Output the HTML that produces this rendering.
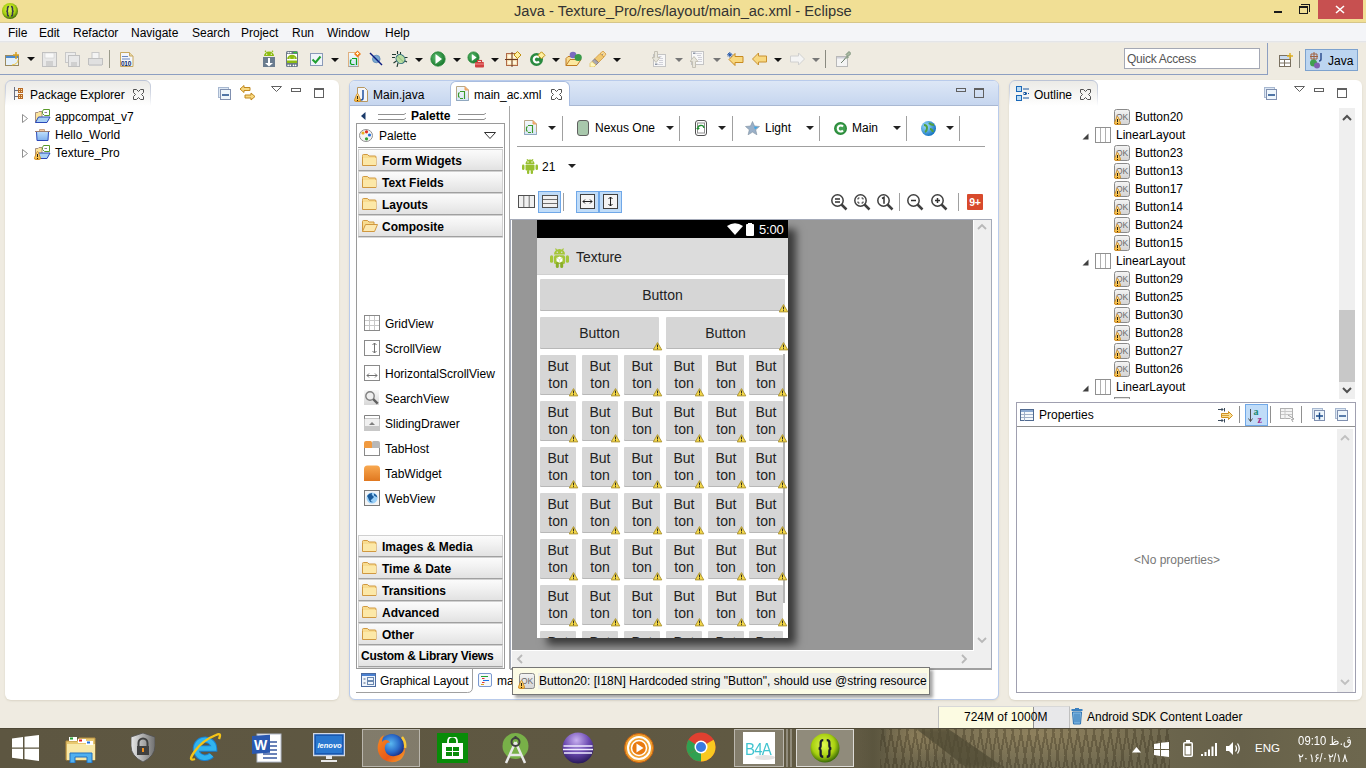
<!DOCTYPE html>
<html><head><meta charset="utf-8">
<style>
*{margin:0;padding:0;box-sizing:border-box}
html,body{width:1366px;height:768px;overflow:hidden;background:#efebe1;font-family:"Liberation Sans",sans-serif;font-size:12px;color:#000;position:relative}
.a{position:absolute}
.t{position:absolute;white-space:nowrap;line-height:1}
</style></head><body>
<svg width="0" height="0" style="position:absolute"><defs><linearGradient id="wg" x1="0" y1="0" x2="0" y2="1"><stop offset="0" stop-color="#fff0b0"/><stop offset="1" stop-color="#f0b030"/></linearGradient><linearGradient id="okg" x1="0" y1="0" x2="0" y2="1"><stop offset="0" stop-color="#f4f4f4"/><stop offset="1" stop-color="#d4d4d4"/></linearGradient></defs></svg>
<!-- ===== TITLE BAR ===== -->
<div class="a" style="left:0;top:0;width:1366px;height:22px;background:#f1df95"></div>
<div class="a" style="left:0;top:22px;width:1366px;height:1px;background:#d6c68a"></div>
<svg class="a" style="left:2px;top:3px" width="17" height="17" viewBox="0 0 17 17"><defs><radialGradient id="gi" cx="45%" cy="40%" r="60%"><stop offset="0" stop-color="#e0f850"/><stop offset="0.65" stop-color="#a8d010"/><stop offset="1" stop-color="#3a6a08"/></radialGradient></defs><circle cx="8" cy="8" r="8" fill="url(#gi)"/><path d="M7 3.5q-1.5 0-1.5 1.5v2q0 1-1 1.2 1 .3 1 1.3v2q0 1.5 1.5 1.5M9 3.5q1.5 0 1.5 1.5v2q0 1 1 1.2-1 .3-1 1.3v2q0 1.5-1.5 1.5" stroke="#363650" stroke-width="1.5" fill="none"/></svg>
<div class="t" style="left:514px;top:4px;font-size:14.7px;color:#333">Java - Texture_Pro/res/layout/main_ac.xml - Eclipse</div>
<div class="a" style="left:1274px;top:11px;width:8px;height:2px;background:#1a1a1a"></div>
<div class="a" style="left:1301px;top:4px;width:9px;height:8px;border:1px solid #1a1a1a;border-left:0;border-bottom:0"></div>
<div class="a" style="left:1299px;top:6px;width:9px;height:8px;border:1px solid #1a1a1a;border-top-width:2px"></div>
<div class="a" style="left:1318px;top:0;width:45px;height:19px;background:#c75050"></div>
<svg class="a" style="left:1335px;top:5px" width="10" height="9"><path d="M1 1L9 8M9 1L1 8" stroke="#fff" stroke-width="1.6"/></svg>

<!-- ===== MENU BAR ===== -->
<div class="a" style="left:0;top:23px;width:1366px;height:18px;background:#f4f5f8"></div><div class="a" style="left:0;top:41px;width:1366px;height:1px;background:#e4e5e8"></div><div class="a" style="left:0;top:42px;width:1366px;height:1px;background:#eceae6"></div>
<div class="t" style="left:8px;top:27px">File</div>
<div class="t" style="left:39px;top:27px">Edit</div>
<div class="t" style="left:73px;top:27px">Refactor</div>
<div class="t" style="left:131px;top:27px">Navigate</div>
<div class="t" style="left:192px;top:27px">Search</div>
<div class="t" style="left:241px;top:27px">Project</div>
<div class="t" style="left:292px;top:27px">Run</div>
<div class="t" style="left:327px;top:27px">Window</div>
<div class="t" style="left:385px;top:27px">Help</div>

<!-- ===== TOOLBAR ===== -->
<div class="a" style="left:0;top:74px;width:1267px;height:1px;background:#8d9fc1"></div>
<div class="a" style="left:1267px;top:43px;width:1px;height:32px;background:#8d9fc1"></div>

<!-- toolbar icons -->
<svg class="a" style="left:5px;top:51px" width="16" height="16"><rect x="0.5" y="4.5" width="13" height="10" fill="#e4f0fa" stroke="#9a8a60"/><rect x="1" y="5" width="12" height="2" fill="#4a8ad0"/><path d="M11 1v7M8 4h6" stroke="#d8a020" stroke-width="1.5"/><path d="M13 9q0 4-6 5" stroke="#f0c840" fill="none"/></svg>
<svg class="a" style="left:27px;top:57px" width="8" height="5"><path d="M0 0h8L4 4z" fill="#111"/></svg>
<svg class="a" style="left:42px;top:52px" width="15" height="15"><rect x="0.5" y="0.5" width="14" height="14" fill="#e8e8e8" stroke="#c0c0c0"/><rect x="3" y="1" width="9" height="5" fill="#f8f8f8" stroke="#c8c8c8" stroke-width="0.5"/><rect x="4" y="9" width="7" height="5" fill="#d0d0d0"/></svg>
<svg class="a" style="left:65px;top:52px" width="16" height="15"><rect x="0.5" y="0.5" width="10" height="10" fill="#ececec" stroke="#c8c8c8"/><rect x="3.5" y="3.5" width="11" height="11" fill="#e8e8e8" stroke="#c0c0c0"/><rect x="6" y="10" width="6" height="4" fill="#d0d0d0"/></svg>
<svg class="a" style="left:88px;top:52px" width="15" height="15"><rect x="4" y="0.5" width="7" height="6" fill="#f4f4f4" stroke="#c8c8c8"/><rect x="0.5" y="6.5" width="14" height="6" fill="#e0e0e0" stroke="#c0c0c0"/><rect x="1" y="12" width="13" height="2" fill="#cfcfcf"/></svg>
<div class="a" style="left:109px;top:50px;width:1px;height:18px;background:#9a9a8a"></div>
<svg class="a" style="left:120px;top:52px" width="14" height="15"><path d="M0.5 0.5h9l3.5 3.5v10.5h-12.5z" fill="#f4f6fb" stroke="#c8a860"/><path d="M9.5 0.5v3.5h3.5" fill="#e8d8a8" stroke="#c8a860"/><path d="M2 4.5h6M2 7h8" stroke="#6a88c0"/><text x="1" y="14" font-family="Liberation Sans" font-weight="bold" font-size="6.5" fill="#0a2a6a" letter-spacing="-0.3">010</text></svg>

<svg class="a" style="left:263px;top:50px" width="12" height="17"><path d="M1 6a5 4.6 0 0 1 10 0z" fill="#8cbc10"/><circle cx="2.5" cy="1.3" r=".8" fill="#8cbc10"/><circle cx="9.5" cy="1.3" r=".8" fill="#8cbc10"/><circle cx="3.7" cy="4.2" r=".7" fill="#f0ece0"/><circle cx="8.3" cy="4.2" r=".7" fill="#f0ece0"/><rect x="0" y="7" width="12" height="10" fill="#6a7c8e"/><path d="M5 8h2v5h3l-4 3.5-4-3.5h3z" fill="#fff"/></svg>
<svg class="a" style="left:286px;top:51px" width="12" height="16"><rect x="0" y="0" width="12" height="16" rx="1.5" fill="#6a7888"/><circle cx="2.2" cy="1.6" r=".8" fill="#fff"/><rect x="3.5" y="1" width="2" height="1.2" fill="#fff"/><circle cx="8.3" cy="1.6" r=".8" fill="#20e020"/><circle cx="10.2" cy="1.6" r=".8" fill="#20e020"/><rect x="1" y="3" width="10" height="9" fill="#fff"/><path d="M1.2 8a4.8 4.2 0 0 1 9.6 0z" fill="#8cbc10"/><circle cx="3.8" cy="7" r=".6" fill="#fff"/><circle cx="8.2" cy="7" r=".6" fill="#fff"/><rect x="1" y="9.5" width="10" height="2.5" fill="#8cbc10"/><circle cx="2.2" cy="14.4" r=".8" fill="#fff"/><circle cx="4.3" cy="14.4" r=".8" fill="#fff"/><circle cx="7.5" cy="14.4" r=".8" fill="#fff"/><circle cx="9.6" cy="14.4" r=".8" fill="#fff"/></svg>
<svg class="a" style="left:310px;top:53px" width="13" height="13"><rect x="0.5" y="0.5" width="12" height="12" fill="#f0f4fa" stroke="#8a9ab8"/><path d="M2.5 6.5l3 3 5-6" stroke="#20a030" stroke-width="2" fill="none"/></svg>
<svg class="a" style="left:331px;top:58px" width="8" height="5"><path d="M0 0h8L4 4z" fill="#111"/></svg>
<svg class="a" style="left:347px;top:50px" width="15" height="17"><defs><linearGradient id="nxg" x1="0" y1="0" x2="0" y2="1"><stop offset="0" stop-color="#f4f8fc"/><stop offset="1" stop-color="#c8e4f4"/></linearGradient></defs><rect x="1.5" y="2.5" width="10" height="14" fill="url(#nxg)" stroke="#e0b080"/><path d="M1.5 16.5h10" stroke="#a0a0a0"/><path d="M5 8.5h4.5v6.5M4.5 9.5L3.5 10.5v3l1 1h3" stroke="#10a020" stroke-width="1.2" fill="none"/><path d="M10.5 0.5l3.5 3.5-3.5 3.5-3.5-3.5z" fill="#f08020"/><path d="M10.5 2v3M9 3.5h3" stroke="#fff4d0"/></svg>
<svg class="a" style="left:369px;top:52px" width="14" height="14"><circle cx="7.3" cy="7" r="3.8" fill="#7aa8d0" stroke="#5a88b8" stroke-width="0.8"/><path d="M1 1l12 12" stroke="#0a1a80" stroke-width="1.4"/></svg>
<svg class="a" style="left:392px;top:51px" width="16" height="16"><path d="M5.5 0v3M8.5 1v3M0 3.5h4M0 6.5h3M1.5 12l3-2M13 6.5h2.5M12 9.5l3 1.5M5 16l1-4" stroke="#203830" stroke-width="1.1"/><ellipse cx="8.5" cy="8" rx="4.2" ry="4.8" transform="rotate(-40 8.5 8)" fill="#b8dca0" stroke="#2a6a7a" stroke-width="1"/><path d="M5.5 5l6 6" stroke="#80b070" stroke-width="0.8"/></svg>
<svg class="a" style="left:415px;top:58px" width="8" height="5"><path d="M0 0h8L4 4z" fill="#111"/></svg>
<svg class="a" style="left:430px;top:51px" width="16" height="16"><defs><radialGradient id="rg" cx="40%" cy="40%" r="60%"><stop offset="0" stop-color="#60c070"/><stop offset="1" stop-color="#1a7a30"/></radialGradient></defs><circle cx="8" cy="8" r="7.2" fill="url(#rg)" stroke="#2a8a3a" stroke-width="0.8"/><path d="M5.5 3v10l6.5-5z" fill="#fff"/></svg>
<svg class="a" style="left:453px;top:58px" width="8" height="5"><path d="M0 0h8L4 4z" fill="#111"/></svg>
<svg class="a" style="left:467px;top:51px" width="18" height="17"><circle cx="6.5" cy="6.5" r="5.6" fill="url(#rg)" stroke="#2a8a3a" stroke-width="0.8"/><path d="M4.8 3v7l4.8-3.5z" fill="#fff"/><rect x="8" y="11" width="9" height="5.5" rx="1" fill="#d04040"/><rect x="10.5" y="9.5" width="4" height="2.2" fill="none" stroke="#d04040" stroke-width="1.1"/><path d="M8 13h9" stroke="#f8a0a0" stroke-width="0.8"/></svg>
<svg class="a" style="left:491px;top:58px" width="8" height="5"><path d="M0 0h8L4 4z" fill="#111"/></svg>
<svg class="a" style="left:505px;top:51px" width="17" height="16"><rect x="1.5" y="2.5" width="11" height="12" fill="#f4dcb0" stroke="#b06a48"/><circle cx="4.5" cy="5.5" r="1.8" fill="#fff8e0"/><circle cx="9.5" cy="5.5" r="1.8" fill="#fff8e0"/><circle cx="4.5" cy="11.5" r="1.8" fill="#fff8e0"/><circle cx="9.5" cy="11.5" r="1.8" fill="#fff8e0"/><path d="M7 1v15M0 8.5h13" stroke="#6a3a20" stroke-width="1"/><path d="M12.5 0.5l3.5 3.5-3.5 3.5-3.5-3.5z" fill="#fff0a0" stroke="#c09010"/></svg>
<svg class="a" style="left:529px;top:51px" width="17" height="16"><circle cx="7.5" cy="8.5" r="6.5" fill="#2a8a40"/><path d="M10 6.5a3 3 0 1 0 0 4" stroke="#fff" stroke-width="2.2" fill="none"/><path d="M12.5 0.8l3.5 3.5-3.5 3.5-3.5-3.5z" fill="#fff0a0" stroke="#c09010"/></svg>
<svg class="a" style="left:552px;top:58px" width="8" height="5"><path d="M0 0h8L4 4z" fill="#111"/></svg>
<svg class="a" style="left:565px;top:51px" width="18" height="16"><path d="M1 14.5V7.5l2-2h4" fill="#f8dc90" stroke="#c07a20"/><path d="M1 14.5l4-6h11l-4 6z" fill="#fce8a0" stroke="#c07a20"/><circle cx="8" cy="4" r="3.3" fill="#7a6ac0"/><circle cx="13.2" cy="6.5" r="3.6" fill="#3a9a4a"/></svg>
<svg class="a" style="left:589px;top:51px" width="18" height="16"><path d="M11 2.5l3-2.5 3 3-2 3z" fill="#f8d890" stroke="#d09840" stroke-width="0.8"/><path d="M11 2.5l4 3.5-5.5 5.5-4-3.5z" fill="#f0c870" stroke="#d09840" stroke-width="0.8"/><path d="M5.5 8l4 3.5-2.5 2.5-4-3.5z" fill="#a8a8b0" stroke="#807070" stroke-width="0.8"/><path d="M3 10.5l4 3.5-2 2H1v-3.5z" fill="#fff8c0" stroke="#e0c060" stroke-width="0.8"/><path d="M13.5 3.5l.6-.6" stroke="#3050a0"/></svg>
<svg class="a" style="left:613px;top:58px" width="8" height="5"><path d="M0 0h8L4 4z" fill="#111"/></svg>

<svg class="a" style="left:652px;top:51px" width="15" height="17"><rect x="1.5" y="3.5" width="12" height="12" fill="#f8f8f8" stroke="#c4c4c4"/><path d="M6.5 5.5h3M8 7.5h3M7 9.5h4M7 11.5h4M6 13.5h5" stroke="#d0d0d8"/><rect x="3" y="12.5" width="2.5" height="1.5" fill="#9098a8"/><path d="M2.5 0.5h3v6h2.5l-4 5-4-5h2.5z" fill="#e8e6dc" stroke="#c4c0b4"/></svg>
<svg class="a" style="left:675px;top:58px" width="8" height="5"><path d="M0 0h8L4 4z" fill="#777"/></svg>
<svg class="a" style="left:690px;top:51px" width="15" height="17"><rect x="1.5" y="0.5" width="12" height="13" fill="#f8f8f8" stroke="#c4c4c4"/><path d="M6 2.5h6M7 4.5h4M8 6.5h4M8 8.5h4M8 10.5h4" stroke="#d0d0d8"/><rect x="3" y="1.5" width="2.5" height="1.5" fill="#9098a8"/><path d="M2.5 16.5h3v-6h2.5l-4-5-4 5h2.5z" fill="#e8e6dc" stroke="#c4c0b4"/></svg>
<svg class="a" style="left:713px;top:58px" width="8" height="5"><path d="M0 0h8L4 4z" fill="#777"/></svg>
<svg class="a" style="left:727px;top:52px" width="17" height="14"><path d="M2 7.5l6-6v3h8v6H8v3z" fill="#f8d880" stroke="#c88a20"/><path d="M1 1l3.5 3.5M4.5 1L1 4.5M2.8 0v5.5M0 2.8h5.5" stroke="#1a50a8" stroke-width="0.9"/></svg>
<svg class="a" style="left:752px;top:52px" width="15" height="14"><path d="M0.5 7l6-6v3h8v6h-8v3z" fill="#f8d880" stroke="#c89030"/></svg>
<svg class="a" style="left:774px;top:58px" width="8" height="5"><path d="M0 0h8L4 4z" fill="#111"/></svg>
<svg class="a" style="left:790px;top:52px" width="15" height="14"><path d="M14.5 7l-6-6v3h-8v6h8v3z" fill="#f4f4f4" stroke="#d0d0d0"/></svg>
<svg class="a" style="left:812px;top:58px" width="8" height="5"><path d="M0 0h8L4 4z" fill="#777"/></svg>
<div class="a" style="left:825px;top:50px;width:1px;height:18px;background:#8a8a80"></div>
<svg class="a" style="left:836px;top:51px" width="15" height="16"><rect x="0.5" y="5.5" width="11" height="10" fill="#f4f4f4" stroke="#b8b8b8"/><rect x="1" y="6" width="10" height="1.5" fill="#d0d0d8"/><path d="M5 12l4-4" stroke="#708070"/><path d="M8 8.5l3-3 1.5 1.5M10 3.5l3-3 2 2-3 3z" fill="#a8b8a0" stroke="#7a907a"/></svg>

<!-- quick access & perspective -->
<div class="a" style="left:1124px;top:48px;width:136px;height:21px;background:#fff;border:1px solid #a4a8b4"></div>
<div class="t" style="left:1127px;top:53px;color:#555;letter-spacing:-0.25px">Quick Access</div>
<svg class="a" style="left:1279px;top:53px" width="15" height="14"><rect x="0.5" y="2.5" width="11" height="11" fill="#fff" stroke="#7a7060"/><path d="M0.5 6.5h11M0.5 10h11M5.5 6.5v7" stroke="#7a7060"/><rect x="1" y="3" width="10" height="3" fill="#c8daf0"/><path d="M11 0v6M8 3h6" stroke="#e0b020" stroke-width="1.4"/></svg>
<div class="a" style="left:1299px;top:51px;width:1px;height:17px;background:#8a8a80"></div>
<div class="a" style="left:1305px;top:49px;width:53px;height:22px;background:#bcd5f0;border:1px solid #7da2ce"></div>
<svg class="a" style="left:1309px;top:52px" width="17" height="17"><path d="M2 2h6v5H2zM5 0v8M1 4.5h8" stroke="#a06040" fill="none"/><path d="M12 1v6q0 2-2 2" stroke="#305090" stroke-width="1.5" fill="none"/><circle cx="4.5" cy="11" r="3.5" fill="#40a050"/><circle cx="8" cy="13.5" r="3" fill="#8060b0"/></svg>
<div class="t" style="left:1328px;top:55px">Java</div>

<!-- ===== PACKAGE EXPLORER ===== -->
<div class="a" style="left:5px;top:80px;width:334px;height:620px;background:#fff;border-radius:6px;box-shadow:0 1px 2px rgba(120,110,80,0.18)"></div>
<svg class="a" style="left:5px;top:80px" width="146" height="26"><defs><linearGradient id="tbg" x1="0" y1="0" x2="0" y2="1"><stop offset="0" stop-color="#ebeae6"/><stop offset="1" stop-color="#fff"/></linearGradient><linearGradient id="tbs" x1="0" y1="0" x2="0" y2="1"><stop offset="0" stop-color="#bcc4d6"/><stop offset="0.5" stop-color="#d4d9e4"/><stop offset="1" stop-color="#fff"/></linearGradient></defs><path d="M0.5 26V6A5.5 5.5 0 0 1 6 0.5H140A5.5 5.5 0 0 1 145.5 6V26" fill="url(#tbg)" stroke="url(#tbs)"/></svg>
<svg class="a" style="left:14px;top:87px" width="10" height="14"><path d="M0.5 0v13M0.5 3.5h3.5M0.5 9.5h3.5" stroke="#6a7080"/><rect x="4" y="1" width="5" height="5" fill="#b86a28"/><rect x="4" y="7" width="5" height="5" fill="#b86a28"/><rect x="5" y="2" width="1" height="1" fill="#ffe8a0"/><rect x="7" y="2" width="1" height="1" fill="#ffe8a0"/><rect x="5" y="4" width="1" height="1" fill="#ffe8a0"/><rect x="7" y="4" width="1" height="1" fill="#ffe8a0"/><rect x="5" y="8" width="1" height="1" fill="#ffe8a0"/><rect x="7" y="8" width="1" height="1" fill="#ffe8a0"/><rect x="5" y="10" width="1" height="1" fill="#ffe8a0"/><rect x="7" y="10" width="1" height="1" fill="#ffe8a0"/></svg>
<div class="t" style="left:30px;top:89px">Package Explorer</div>
<svg class="a" style="left:133px;top:89px" width="11" height="11" viewBox="0 0 11 11"><path d="M0.5 0.5h3l2 2 2-2h3v3l-2 2 2 2v3h-3l-2-2-2 2h-3v-3l2-2-2-2z" fill="none" stroke="#505050"/></svg>
<svg class="a" style="left:218px;top:87px" width="14" height="14"><rect x="0.5" y="0.5" width="10" height="10" fill="#dde8f4" stroke="#a8b8d0"/><rect x="2.5" y="2.5" width="10" height="10" fill="#eef6fc" stroke="#8090b0"/><path d="M4 8h7" stroke="#1a4a8a" stroke-width="1.5"/></svg>
<svg class="a" style="left:239px;top:85px" width="17" height="16"><path d="M1 4l4-3.5v2h6v3h-6v2z" fill="#f8d880" stroke="#c08820"/><path d="M16 11.5l-4 3.5v-2h-6v-3h6v-2z" fill="#f8d880" stroke="#c08820"/></svg>
<svg class="a" style="left:271px;top:86px" width="11" height="6"><path d="M0.5 0.5h10l-5 5z" fill="#fff" stroke="#606060"/></svg>
<div class="a" style="left:291px;top:88px;width:10px;height:4px;border:1px solid #606060"></div>
<div class="a" style="left:314px;top:88px;width:10px;height:10px;border:1px solid #606060;border-top-width:2px"></div>

<!-- tree -->
<svg class="a" style="left:22px;top:114px" width="6" height="9"><path d="M0.5 0.5l5 4-5 4z" fill="#fff" stroke="#909090"/></svg>
<svg class="a" style="left:34px;top:108px" width="17" height="16"><path d="M1.5 14.5V4.5H4L5 3.5H8V9" fill="#fce49c" stroke="#a89080"/><path d="M1.5 14.5L4.5 9H16L13 14.5Z" fill="#a8d0f4" stroke="#2a48b8"/><path d="M9.5 1.5H15.5V7.5H10.5L8.5 5.5V3.5Z" fill="#fff" stroke="#5a9a2a"/><path d="M10.5 4.5H13" stroke="#8a7a9a"/></svg>
<div class="t" style="left:55px;top:111px">appcompat_v7</div>
<svg class="a" style="left:35px;top:128px" width="16" height="14"><defs><linearGradient id="cpg" x1="0" y1="0" x2="0" y2="1"><stop offset="0" stop-color="#c0e0fc"/><stop offset="1" stop-color="#80b0ec"/></linearGradient></defs><path d="M4.5 3V1.5H9.5V3" fill="#f0c8a0" stroke="#c8a080"/><path d="M1.5 3.5H13.5L13 12.5H2Z" fill="url(#cpg)" stroke="#2a48b8"/><path d="M0 3.5H15" stroke="#a08070"/></svg>
<div class="t" style="left:55px;top:129px">Hello_World</div>
<svg class="a" style="left:22px;top:149px" width="6" height="9"><path d="M0.5 0.5l5 4-5 4z" fill="#fff" stroke="#909090"/></svg>
<svg class="a" style="left:34px;top:144px" width="17" height="16"><path d="M1.5 14.5V4.5H4L5 3.5H8V9" fill="#fce49c" stroke="#a89080"/><path d="M1.5 14.5L4.5 9H16L13 14.5Z" fill="#a8d0f4" stroke="#2a48b8"/><path d="M9.5 1.5H15.5V7.5H10.5L8.5 5.5V3.5Z" fill="#fff" stroke="#5a9a2a"/><path d="M10.5 4.5H13" stroke="#8a7a9a"/></svg><svg class="a" style="left:34px;top:151px" width="7" height="9"><path d="M3.5 0.5Q3.9 0.5 4.2 1.2L6.4 6.6Q6.9 8.5 5.5 8.5H1.5Q0.1 8.5 0.6 6.6L2.8 1.2Q3.1 0.5 3.5 0.5z" fill="url(#wg)" stroke="#d08a20" stroke-width="0.9"/><rect x="3" y="3" width="1" height="3" fill="#2a2010"/><rect x="3" y="7" width="1" height="1" fill="#2a2010"/></svg>
<div class="t" style="left:55px;top:147px">Texture_Pro</div>

<!-- ===== EDITOR ===== -->
<div class="a" style="left:349px;top:80px;width:650px;height:620px;background:#fff;border:1px solid #b9cbeb;border-radius:6px;box-shadow:0 1px 2px rgba(120,110,80,0.15)"></div>
<div class="a" style="left:350px;top:81px;width:648px;height:24px;background:linear-gradient(#dde7f6,#c6d6ef);border-radius:5px 5px 0 0"></div>
<div class="a" style="left:350px;top:105px;width:100px;height:1px;background:#a9b8d2"></div>
<div class="a" style="left:569px;top:105px;width:429px;height:1px;background:#a9b8d2"></div>
<!-- active tab -->
<div class="a" style="left:450px;top:81px;width:120px;height:25px;background:#fff;border:1px solid #a9bde0;border-bottom:0;border-radius:6px 6px 0 0"></div>
<svg class="a" style="left:354px;top:87px" width="15" height="16"><path d="M3.5 0.5h7l3 3v11h-10z" fill="#f4f6fa" stroke="#b89860"/><path d="M9 3v8q0 2-2 2h-1" stroke="#2050a0" stroke-width="1.5" fill="none"/></svg><svg class="a" style="left:354px;top:93px" width="7" height="9"><path d="M3.5 0.5Q3.9 0.5 4.2 1.2L6.4 6.6Q6.9 8.5 5.5 8.5H1.5Q0.1 8.5 0.6 6.6L2.8 1.2Q3.1 0.5 3.5 0.5z" fill="url(#wg)" stroke="#d08a20" stroke-width="0.9"/><rect x="3" y="3" width="1" height="3" fill="#2a2010"/><rect x="3" y="7" width="1" height="1" fill="#2a2010"/></svg>
<div class="t" style="left:373px;top:89px">Main.java</div>
<svg class="a" style="left:456px;top:86px" width="13" height="16"><defs><linearGradient id="xg456" x1="0" y1="0" x2="0" y2="1"><stop offset="0" stop-color="#f4f8fc"/><stop offset="1" stop-color="#d8e6f4"/></linearGradient></defs><path d="M0.5 0.5H9L12.5 4V14.5H0.5Z" fill="url(#xg456)" stroke="#b8a888"/><path d="M9 0.5V4H12.5" fill="#f4b070" stroke="#e8a060"/><path d="M0.5 12v2.5h12V12" stroke="#90a8c0" fill="none"/><path d="M4 5.5H9M8.5 5V13M3.5 6.5L2.5 7.5V10.5L3.5 11.5M4 12.5H7" stroke="#3a9a2a" stroke-width="1.1" fill="none"/></svg>
<div class="t" style="left:474px;top:89px">main_ac.xml</div>
<svg class="a" style="left:551px;top:89px" width="11" height="11" viewBox="0 0 11 11"><path d="M0.5 0.5h3l2 2 2-2h3v3l-2 2 2 2v3h-3l-2-2-2 2h-3v-3l2-2-2-2z" fill="none" stroke="#505050"/></svg>
<div class="a" style="left:956px;top:88px;width:10px;height:4px;border:1px solid #606060"></div>
<div class="a" style="left:974px;top:88px;width:10px;height:10px;border:1px solid #606060;border-top-width:2px"></div>

<!-- palette -->
<svg class="a" style="left:361px;top:112px" width="5" height="8"><path d="M4.5 0v8L0 4z" fill="#1a3a6a"/></svg>
<svg class="a" style="left:378px;top:113px" width="29" height="8"><path d="M0 1.5h26l2-1.5M0 6.5h26l2-1.5" stroke="#909090" fill="none"/></svg>
<div class="t" style="left:411px;top:110px;font-weight:bold">Palette</div>
<svg class="a" style="left:458px;top:113px" width="29" height="8"><path d="M0 1.5h26l2-1.5M0 6.5h26l2-1.5" stroke="#909090" fill="none"/></svg>
<div class="a" style="left:356px;top:123px;width:149px;height:546px;border:1px solid #9a9a9a;background:#fff"></div>
<svg class="a" style="left:359px;top:129px" width="14" height="13"><ellipse cx="7" cy="6.5" rx="6.5" ry="6" fill="#f4f4f4" stroke="#909090"/><circle cx="4" cy="4" r="1.6" fill="#e8b020"/><circle cx="7.5" cy="2.8" r="1.6" fill="#e03020"/><circle cx="10.5" cy="6" r="1.6" fill="#2070e0"/><circle cx="7.5" cy="9.8" r="1.6" fill="#30a030"/></svg>
<div class="t" style="left:379px;top:130px">Palette</div>
<svg class="a" style="left:484px;top:132px" width="12" height="7"><path d="M0.5 0.5h11l-5.5 6z" fill="#fff" stroke="#303030"/></svg>
<div class="a" style="left:358px;top:147px;width:145px;height:1px;background:#9a9a9a"></div>

<div class="a" style="left:358px;top:149px;width:145px;height:22px;background:linear-gradient(#fbfbfb,#f2f2f2 40%,#e2e2e2);border:1px solid #d0d0d0;border-bottom:1px solid #a0a0a0;box-shadow:0 1px 0 #d8d8d8"></div>
<svg class="a" style="left:362px;top:154px" width="15" height="12"><path d="M0.5 2.5v-1a1 1 0 0 1 1-1h4l1.5 1.5h6a1 1 0 0 1 1 1v8.5h-13.5z" fill="#f8dc90" stroke="#d09840"/><rect x="1" y="4" width="13" height="7" fill="#fce8a8"/></svg>
<div class="t" style="left:382px;top:155px;font-weight:bold">Form Widgets</div>
<div class="a" style="left:358px;top:171px;width:145px;height:22px;background:linear-gradient(#fbfbfb,#f2f2f2 40%,#e2e2e2);border:1px solid #d0d0d0;border-bottom:1px solid #a0a0a0;box-shadow:0 1px 0 #d8d8d8"></div>
<svg class="a" style="left:362px;top:176px" width="15" height="12"><path d="M0.5 2.5v-1a1 1 0 0 1 1-1h4l1.5 1.5h6a1 1 0 0 1 1 1v8.5h-13.5z" fill="#f8dc90" stroke="#d09840"/><rect x="1" y="4" width="13" height="7" fill="#fce8a8"/></svg>
<div class="t" style="left:382px;top:177px;font-weight:bold">Text Fields</div>
<div class="a" style="left:358px;top:193px;width:145px;height:22px;background:linear-gradient(#fbfbfb,#f2f2f2 40%,#e2e2e2);border:1px solid #d0d0d0;border-bottom:1px solid #a0a0a0;box-shadow:0 1px 0 #d8d8d8"></div>
<svg class="a" style="left:362px;top:198px" width="15" height="12"><path d="M0.5 2.5v-1a1 1 0 0 1 1-1h4l1.5 1.5h6a1 1 0 0 1 1 1v8.5h-13.5z" fill="#f8dc90" stroke="#d09840"/><rect x="1" y="4" width="13" height="7" fill="#fce8a8"/></svg>
<div class="t" style="left:382px;top:199px;font-weight:bold">Layouts</div>
<div class="a" style="left:358px;top:215px;width:145px;height:22px;background:linear-gradient(#fbfbfb,#f2f2f2 40%,#e2e2e2);border:1px solid #d0d0d0;border-bottom:1px solid #a0a0a0;box-shadow:0 1px 0 #d8d8d8"></div>
<svg class="a" style="left:362px;top:220px" width="16" height="12"><path d="M0.5 11.5v-10a1 1 0 0 1 1-1h4l1.5 1.5h5v2" fill="#f8dc90" stroke="#d09840"/><path d="M0.5 11.5l3-7h12l-3 7z" fill="#fce8b0" stroke="#d09840"/></svg>
<div class="t" style="left:382px;top:221px;font-weight:bold">Composite</div>
<svg class="a" style="left:364px;top:315px" width="16" height="16"><rect x="0.5" y="0.5" width="15" height="15" fill="#fff" stroke="#8a8a8a"/><path d="M5.5 1v14M10.5 1v14M1 5.5h14M1 10.5h14" stroke="#c8c8c8"/></svg>
<div class="t" style="left:385px;top:318px">GridView</div>
<svg class="a" style="left:364px;top:340px" width="16" height="16"><rect x="0.5" y="0.5" width="15" height="15" fill="#fff" stroke="#8a8a8a"/><path d="M10.5 3v10M8.5 5l2-2 2 2M8.5 11l2 2 2-2" stroke="#707070" fill="none"/></svg>
<div class="t" style="left:385px;top:343px">ScrollView</div>
<svg class="a" style="left:364px;top:365px" width="16" height="16"><rect x="0.5" y="0.5" width="15" height="15" fill="#fff" stroke="#8a8a8a"/><path d="M3 10.5h10M5 8.5l-2 2 2 2M11 8.5l2 2-2 2" stroke="#707070" fill="none"/></svg>
<div class="t" style="left:385px;top:368px">HorizontalScrollView</div>
<svg class="a" style="left:364px;top:390px" width="16" height="16"><defs><linearGradient id="svg1" x1="0" y1="0" x2="0" y2="1"><stop offset="0" stop-color="#f8f8f8"/><stop offset="1" stop-color="#d8d8d8"/></linearGradient></defs><rect x="0" y="0" width="15" height="15" fill="url(#svg1)"/><circle cx="6" cy="6" r="4.2" fill="#eee" stroke="#808080" stroke-width="1.4"/><path d="M9.2 9.2l4.5 4.5" stroke="#606060" stroke-width="2.4"/></svg>
<div class="t" style="left:385px;top:393px">SearchView</div>
<svg class="a" style="left:364px;top:415px" width="16" height="16"><path d="M0.5 4V0.5h15V4" stroke="#808080" fill="none"/><path d="M0.5 3.5h15M0.5 3.5v8M15.5 3.5v8" stroke="#909090" stroke-dasharray="1 1"/><rect x="1" y="4" width="14" height="7" fill="#f0f0f0"/><path d="M5 10l3-3 3 3z" fill="#808080"/><rect x="0" y="11" width="16" height="5" fill="#c8c8c8"/></svg>
<div class="t" style="left:385px;top:418px">SlidingDrawer</div>
<svg class="a" style="left:364px;top:440px" width="16" height="16"><rect x="0.5" y="7.5" width="15" height="8" fill="#fff" stroke="#8a8a8a"/><path d="M0 8V3a2 2 0 0 1 2-2h4.5a1.5 1.5 0 0 1 1.5 1.5V8z" fill="#f09a40"/><path d="M8 8V2.5A1.5 1.5 0 0 1 9.5 1H14a2 2 0 0 1 2 2V8z" fill="#b8b8b8"/></svg>
<div class="t" style="left:385px;top:443px">TabHost</div>
<svg class="a" style="left:364px;top:465px" width="16" height="16"><defs><linearGradient id="twg" x1="0" y1="0" x2="0" y2="1"><stop offset="0" stop-color="#f8a850"/><stop offset="1" stop-color="#e07820"/></linearGradient></defs><path d="M0 16V4a3.5 3.5 0 0 1 3.5-3.5h9A3.5 3.5 0 0 1 16 4v12z" fill="url(#twg)"/></svg>
<div class="t" style="left:385px;top:468px">TabWidget</div>
<svg class="a" style="left:364px;top:490px" width="16" height="16"><rect x="0.5" y="0.5" width="15" height="15" fill="#f4f4f4" stroke="#7a7a7a"/><circle cx="8" cy="8" r="5.5" fill="#9ad0f8"/><path d="M3 6q2-3 5-3-1 2 1 3t-1 3 1 3q-3 1-4-2T3 6zM10 3.5q3 1 3.5 4-2-1-3.5-2z" fill="#1a5a9a"/></svg>
<div class="t" style="left:385px;top:493px">WebView</div>
<div class="a" style="left:358px;top:535px;width:145px;height:22px;background:linear-gradient(#fbfbfb,#f2f2f2 40%,#e2e2e2);border:1px solid #d0d0d0;border-bottom:1px solid #a0a0a0;box-shadow:0 1px 0 #d8d8d8"></div>
<svg class="a" style="left:362px;top:540px" width="15" height="12"><path d="M0.5 2.5v-1a1 1 0 0 1 1-1h4l1.5 1.5h6a1 1 0 0 1 1 1v8.5h-13.5z" fill="#f8dc90" stroke="#d09840"/><rect x="1" y="4" width="13" height="7" fill="#fce8a8"/></svg>
<div class="t" style="left:382px;top:541px;font-weight:bold">Images &amp; Media</div>
<div class="a" style="left:358px;top:557px;width:145px;height:22px;background:linear-gradient(#fbfbfb,#f2f2f2 40%,#e2e2e2);border:1px solid #d0d0d0;border-bottom:1px solid #a0a0a0;box-shadow:0 1px 0 #d8d8d8"></div>
<svg class="a" style="left:362px;top:562px" width="15" height="12"><path d="M0.5 2.5v-1a1 1 0 0 1 1-1h4l1.5 1.5h6a1 1 0 0 1 1 1v8.5h-13.5z" fill="#f8dc90" stroke="#d09840"/><rect x="1" y="4" width="13" height="7" fill="#fce8a8"/></svg>
<div class="t" style="left:382px;top:563px;font-weight:bold">Time &amp; Date</div>
<div class="a" style="left:358px;top:579px;width:145px;height:22px;background:linear-gradient(#fbfbfb,#f2f2f2 40%,#e2e2e2);border:1px solid #d0d0d0;border-bottom:1px solid #a0a0a0;box-shadow:0 1px 0 #d8d8d8"></div>
<svg class="a" style="left:362px;top:584px" width="15" height="12"><path d="M0.5 2.5v-1a1 1 0 0 1 1-1h4l1.5 1.5h6a1 1 0 0 1 1 1v8.5h-13.5z" fill="#f8dc90" stroke="#d09840"/><rect x="1" y="4" width="13" height="7" fill="#fce8a8"/></svg>
<div class="t" style="left:382px;top:585px;font-weight:bold">Transitions</div>
<div class="a" style="left:358px;top:601px;width:145px;height:22px;background:linear-gradient(#fbfbfb,#f2f2f2 40%,#e2e2e2);border:1px solid #d0d0d0;border-bottom:1px solid #a0a0a0;box-shadow:0 1px 0 #d8d8d8"></div>
<svg class="a" style="left:362px;top:606px" width="15" height="12"><path d="M0.5 2.5v-1a1 1 0 0 1 1-1h4l1.5 1.5h6a1 1 0 0 1 1 1v8.5h-13.5z" fill="#f8dc90" stroke="#d09840"/><rect x="1" y="4" width="13" height="7" fill="#fce8a8"/></svg>
<div class="t" style="left:382px;top:607px;font-weight:bold">Advanced</div>
<div class="a" style="left:358px;top:623px;width:145px;height:22px;background:linear-gradient(#fbfbfb,#f2f2f2 40%,#e2e2e2);border:1px solid #d0d0d0;border-bottom:1px solid #a0a0a0;box-shadow:0 1px 0 #d8d8d8"></div>
<svg class="a" style="left:362px;top:628px" width="15" height="12"><path d="M0.5 2.5v-1a1 1 0 0 1 1-1h4l1.5 1.5h6a1 1 0 0 1 1 1v8.5h-13.5z" fill="#f8dc90" stroke="#d09840"/><rect x="1" y="4" width="13" height="7" fill="#fce8a8"/></svg>
<div class="t" style="left:382px;top:629px;font-weight:bold">Other</div>
<div class="a" style="left:358px;top:645px;width:145px;height:22px;background:linear-gradient(#fbfbfb,#f2f2f2 40%,#e2e2e2);border:1px solid #d0d0d0;border-bottom:1px solid #a0a0a0;box-shadow:0 1px 0 #d8d8d8"></div>
<div class="t" style="left:361px;top:650px;font-weight:bold;letter-spacing:-0.25px">Custom &amp; Library Views</div>
<!-- sash -->
<div class="a" style="left:509px;top:106px;width:1px;height:563px;background:#a8a8a8"></div>
<!-- config toolbar row1 -->
<svg class="a" style="left:524px;top:120px" width="13" height="16"><defs><linearGradient id="xg524" x1="0" y1="0" x2="0" y2="1"><stop offset="0" stop-color="#f4f8fc"/><stop offset="1" stop-color="#d8e6f4"/></linearGradient></defs><path d="M0.5 0.5H9L12.5 4V14.5H0.5Z" fill="url(#xg524)" stroke="#b8a888"/><path d="M9 0.5V4H12.5" fill="#f4b070" stroke="#e8a060"/><path d="M0.5 12v2.5h12V12" stroke="#90a8c0" fill="none"/><path d="M4 5.5H9M8.5 5V13M3.5 6.5L2.5 7.5V10.5L3.5 11.5M4 12.5H7" stroke="#3a9a2a" stroke-width="1.1" fill="none"/></svg>
<svg class="a" style="left:548px;top:126px" width="8" height="4"><path d="M0 0h8L4 4z" fill="#222"/></svg>
<div class="a" style="left:562px;top:116px;width:1px;height:25px;background:#a0a0a0"></div>
<svg class="a" style="left:577px;top:120px" width="12" height="16"><rect x="0.5" y="0.5" width="11" height="15" rx="2.5" fill="#a8c8ac" stroke="#606060"/></svg>
<div class="t" style="left:595px;top:122px">Nexus One</div>
<svg class="a" style="left:666px;top:126px" width="8" height="4"><path d="M0 0h8L4 4z" fill="#222"/></svg>
<div class="a" style="left:679px;top:116px;width:1px;height:25px;background:#a0a0a0"></div>
<svg class="a" style="left:695px;top:120px" width="12" height="16"><rect x="0.5" y="0.5" width="11" height="15" rx="2.5" fill="#fff" stroke="#505050"/><rect x="2.5" y="3" width="7" height="10" fill="#fff" stroke="#909090"/><path d="M3 9a3 3 0 0 1 6-1" stroke="#209030" stroke-width="1.3" fill="none"/><path d="M1 8l2 2 2-2" fill="#209030"/></svg>
<svg class="a" style="left:718px;top:126px" width="8" height="4"><path d="M0 0h8L4 4z" fill="#222"/></svg>
<div class="a" style="left:732px;top:116px;width:1px;height:25px;background:#a0a0a0"></div>
<svg class="a" style="left:745px;top:121px" width="15" height="14"><path d="M7.5 0.5l2 4.5 5 .5-3.8 3.3 1.2 5-4.4-2.7-4.4 2.7 1.2-5L.5 5.5l5-.5z" fill="#9ab0c8" stroke="#8090a0" stroke-width="0.6"/><path d="M7.5 2l1.5 3.5 4 .4-3 2.6" fill="#40a8e8"/></svg>
<div class="t" style="left:765px;top:122px">Light</div>
<svg class="a" style="left:806px;top:126px" width="8" height="4"><path d="M0 0h8L4 4z" fill="#222"/></svg>
<div class="a" style="left:819px;top:116px;width:1px;height:25px;background:#a0a0a0"></div>
<svg class="a" style="left:834px;top:122px" width="13" height="13"><circle cx="6.5" cy="6.5" r="6.5" fill="#2a8a3a"/><circle cx="6.5" cy="6.5" r="5" fill="#40a050"/><path d="M9 4.5a3 3 0 1 0 0 4" stroke="#fff" stroke-width="2" fill="none"/></svg>
<div class="t" style="left:852px;top:122px">Main</div>
<svg class="a" style="left:893px;top:126px" width="8" height="4"><path d="M0 0h8L4 4z" fill="#222"/></svg>
<div class="a" style="left:906px;top:116px;width:1px;height:25px;background:#a0a0a0"></div>
<svg class="a" style="left:921px;top:121px" width="15" height="15"><defs><radialGradient id="gl" cx="35%" cy="35%" r="70%"><stop offset="0" stop-color="#a0e0ff"/><stop offset="1" stop-color="#1070c0"/></radialGradient></defs><circle cx="7.5" cy="7.5" r="7.5" fill="url(#gl)"/><path d="M3 4q3 0 3 3t-2 4M8 2q2 2 5 2M9 8q2 0 3 3" stroke="#50a040" stroke-width="2" fill="none"/></svg>
<svg class="a" style="left:946px;top:126px" width="8" height="4"><path d="M0 0h8L4 4z" fill="#222"/></svg>
<div class="a" style="left:959px;top:116px;width:1px;height:25px;background:#a0a0a0"></div>
<div class="a" style="left:517px;top:146px;width:468px;height:1px;background:#a0a0a0"></div>
<!-- row2 -->
<svg class="a" style="left:522px;top:158px" width="16" height="16"><path d="M3.5 6a4.5 4.5 0 0 1 9 0z" fill="#98c030"/><path d="M5 1l1.2 2M11 1l-1.2 2" stroke="#98c030"/><rect x="3.5" y="6.5" width="9" height="6" rx="1" fill="#98c030"/><rect x="0" y="6.5" width="2.5" height="5.5" rx="1.2" fill="#98c030"/><rect x="13.5" y="6.5" width="2.5" height="5.5" rx="1.2" fill="#98c030"/><rect x="5" y="12" width="2.3" height="4" rx="1" fill="#98c030"/><rect x="8.7" y="12" width="2.3" height="4" rx="1" fill="#98c030"/><circle cx="6" cy="4" r=".7" fill="#fff"/><circle cx="10" cy="4" r=".7" fill="#fff"/></svg>
<div class="t" style="left:542px;top:161px">21</div>
<svg class="a" style="left:568px;top:164px" width="8" height="4"><path d="M0 0h8L4 4z" fill="#222"/></svg>
<!-- row3 -->
<svg class="a" style="left:518px;top:195px" width="17" height="13"><rect x="0.5" y="0.5" width="16" height="12" fill="#f0f0f0" stroke="#505050"/><path d="M5.8 1v11M11.2 1v11" stroke="#707070"/></svg>
<div class="a" style="left:538px;top:191px;width:23px;height:22px;background:#c0dcf8;border:1px solid #70a8e8"></div>
<svg class="a" style="left:542px;top:195px" width="16" height="13"><rect x="0.5" y="0.5" width="15" height="12" fill="#f0f0f0" stroke="#505050"/><path d="M1 4.5h14M1 8.5h14" stroke="#707070"/></svg>
<div class="a" style="left:563px;top:193px;width:1px;height:18px;background:#a0a0a0"></div>
<div class="a" style="left:576px;top:191px;width:23px;height:22px;background:#c0dcf8;border:1px solid #70a8e8"></div>
<svg class="a" style="left:580px;top:194px" width="15" height="15"><rect x="0.5" y="0.5" width="14" height="14" fill="#f4f4f4" stroke="#404040"/><path d="M3 7.5h9M5 5.5l-2 2 2 2M10 5.5l2 2-2 2" stroke="#202020" fill="none"/></svg>
<div class="a" style="left:599px;top:191px;width:23px;height:22px;background:#c0dcf8;border:1px solid #70a8e8"></div>
<svg class="a" style="left:603px;top:194px" width="15" height="15"><rect x="0.5" y="0.5" width="14" height="14" fill="#f4f4f4" stroke="#404040"/><path d="M7.5 3v9M5.5 5l2-2 2 2M5.5 10l2 2 2-2" stroke="#202020" fill="none"/></svg>
<!-- zoom icons -->
<svg class="a" style="left:831px;top:194px" width="17" height="17"><circle cx="6.5" cy="6.5" r="5.7" fill="#fff" stroke="#404040" stroke-width="1.5"/><path d="M10.5 10.5l5 5" stroke="#404040" stroke-width="2.5"/><path d="M4 5h5M4 8h5" stroke="#303030" stroke-width="1.4"/></svg>
<svg class="a" style="left:854px;top:194px" width="17" height="17"><circle cx="6.5" cy="6.5" r="5.7" fill="#fff" stroke="#404040" stroke-width="1.5"/><path d="M10.5 10.5l5 5" stroke="#404040" stroke-width="2.5"/><path d="M4 5.5v-1.5h1.5M7.5 4h1.5v1.5M9 7.5v1.5h-1.5M5.5 9h-1.5v-1.5" stroke="#303030" fill="none"/></svg>
<svg class="a" style="left:877px;top:194px" width="17" height="17"><circle cx="6.5" cy="6.5" r="5.7" fill="#fff" stroke="#404040" stroke-width="1.5"/><path d="M10.5 10.5l5 5" stroke="#404040" stroke-width="2.5"/><path d="M5 4.5l2-1.2v6.5" stroke="#303030" stroke-width="1.5" fill="none"/></svg>
<div class="a" style="left:899px;top:193px;width:1px;height:18px;background:#a0a0a0"></div>
<svg class="a" style="left:907px;top:194px" width="17" height="17"><circle cx="6.5" cy="6.5" r="5.7" fill="#fff" stroke="#404040" stroke-width="1.5"/><path d="M10.5 10.5l5 5" stroke="#404040" stroke-width="2.5"/><path d="M4 6.5h5" stroke="#303030" stroke-width="1.5"/></svg>
<svg class="a" style="left:931px;top:194px" width="17" height="17"><circle cx="6.5" cy="6.5" r="5.7" fill="#fff" stroke="#404040" stroke-width="1.5"/><path d="M10.5 10.5l5 5" stroke="#404040" stroke-width="2.5"/><path d="M4 6.5h5M6.5 4v5" stroke="#303030" stroke-width="1.5"/></svg>
<div class="a" style="left:958px;top:193px;width:1px;height:18px;background:#a0a0a0"></div>
<div class="a" style="left:967px;top:194px;width:16px;height:16px;background:#d84a2c;border-radius:1px"></div>
<div class="t" style="left:967px;top:197px;width:16px;text-align:center;font-size:10.5px;font-weight:bold;color:#fff;letter-spacing:-0.3px">9+</div>

<!-- canvas box -->
<div class="a" style="left:510px;top:219px;width:482px;height:451px;border:1px solid #a4aab8;border-bottom:2px solid #a0a0a0;background:#fff"></div>
<div class="a" style="left:512px;top:220px;width:461px;height:430px;background:#979797;overflow:hidden">
  <!-- shadow -->
  <div class="a" style="left:25px;top:0px;width:251px;height:418px;box-shadow:9px 8px 8px -1px rgba(0,0,0,0.62);background:#555"></div>
  <!-- phone -->
  <div class="a" style="left:25px;top:0;width:251px;height:418px;background:#fff;overflow:hidden">
    <div class="a" style="left:0;top:0;width:251px;height:18px;background:#000"></div>
    <svg class="a" style="left:190px;top:3px" width="16" height="12"><path d="M0 3Q8-2.5 16 3L8 12z" fill="#fff"/></svg>
    <div class="a" style="left:209px;top:4px;width:8px;height:12px;background:#fff;border-radius:1px"></div>
    <div class="a" style="left:211px;top:3px;width:4px;height:2px;background:#fff"></div>
    <div class="t" style="left:222px;top:3px;font-size:13px;color:#fff;letter-spacing:-0.2px">5:00</div>
    <div class="a" style="left:0;top:18px;width:251px;height:37px;background:#dcdcdc;border-bottom:1px solid #d0d0d0"></div>
    <svg class="a" style="left:12px;top:25px" width="21" height="24"><path d="M5 9.5a5.5 5.5 0 0 1 11 0z" fill="#a4c639"/><path d="M6.5 3.5l1.6 2.4M14.5 3.5l-1.6 2.4" stroke="#a4c639" stroke-width="1.2"/><circle cx="8.3" cy="7.3" r=".8" fill="#dcdcdc"/><circle cx="12.7" cy="7.3" r=".8" fill="#dcdcdc"/><rect x="5" y="10.3" width="11" height="8.7" rx="1.5" fill="#a4c639"/><rect x="1" y="10.3" width="3.2" height="7.5" rx="1.6" fill="#a4c639"/><rect x="16.8" y="10.3" width="3.2" height="7.5" rx="1.6" fill="#a4c639"/><rect x="6.8" y="17" width="3" height="6" rx="1.5" fill="#8aae28"/><rect x="11.2" y="17" width="3" height="6" rx="1.5" fill="#8aae28"/><path d="M10.5 11.5l3 1.5v3.2l-3 1.6-3-1.6v-3.2z" fill="#fff"/><path d="M7.5 13l3 1.5 3-1.5M10.5 14.5v3.3" stroke="#c8d8a0" stroke-width="0.6" fill="none"/></svg>
    <div class="t" style="left:39px;top:30px;font-size:14px;color:#222">Texture</div>

<div class="a" style="left:3px;top:59px;width:245px;height:31px;background:#d6d6d6;border-radius:1px;box-shadow:0 1px 0 #b8b8b8"></div><div class="t" style="left:3px;top:68px;width:245px;text-align:center;font-size:14px;color:#222">Button</div>
<svg class="a" style="left:242px;top:84px" width="10" height="9"><path d="M4.5 0.6L8.8 7.9H0.2z" fill="#f4d848" stroke="#a89030" stroke-width="0.9" stroke-linejoin="round"/><rect x="4" y="2.6" width="1" height="2.8" fill="#2a2a20"/><rect x="4" y="6.2" width="1" height="1" fill="#2a2a20"/></svg>
<div class="a" style="left:3px;top:97px;width:119px;height:31px;background:#d6d6d6;border-radius:1px;box-shadow:0 1px 0 #b8b8b8"></div><div class="t" style="left:3px;top:106px;width:119px;text-align:center;font-size:14px;color:#222">Button</div>
<svg class="a" style="left:116px;top:122px" width="10" height="9"><path d="M4.5 0.6L8.8 7.9H0.2z" fill="#f4d848" stroke="#a89030" stroke-width="0.9" stroke-linejoin="round"/><rect x="4" y="2.6" width="1" height="2.8" fill="#2a2a20"/><rect x="4" y="6.2" width="1" height="1" fill="#2a2a20"/></svg>
<div class="a" style="left:129px;top:97px;width:119px;height:31px;background:#d6d6d6;border-radius:1px;box-shadow:0 1px 0 #b8b8b8"></div><div class="t" style="left:129px;top:106px;width:119px;text-align:center;font-size:14px;color:#222">Button</div>
<svg class="a" style="left:242px;top:122px" width="10" height="9"><path d="M4.5 0.6L8.8 7.9H0.2z" fill="#f4d848" stroke="#a89030" stroke-width="0.9" stroke-linejoin="round"/><rect x="4" y="2.6" width="1" height="2.8" fill="#2a2a20"/><rect x="4" y="6.2" width="1" height="1" fill="#2a2a20"/></svg>
<div class="a" style="left:246px;top:134px;width:2px;height:249px;background:#b4b4b4"></div>
<div class="a" style="left:3px;top:135px;width:36px;height:39px;background:#d6d6d6;border-radius:1px;box-shadow:0 1px 0 #b8b8b8"></div><div class="t" style="left:3px;top:138px;width:36px;text-align:center;font-size:14px;line-height:17px;color:#222;white-space:normal">But<br>ton</div>
<svg class="a" style="left:32px;top:168px" width="10" height="9"><path d="M4.5 0.6L8.8 7.9H0.2z" fill="#f4d848" stroke="#a89030" stroke-width="0.9" stroke-linejoin="round"/><rect x="4" y="2.6" width="1" height="2.8" fill="#2a2a20"/><rect x="4" y="6.2" width="1" height="1" fill="#2a2a20"/></svg>
<div class="a" style="left:45px;top:135px;width:36px;height:39px;background:#d6d6d6;border-radius:1px;box-shadow:0 1px 0 #b8b8b8"></div><div class="t" style="left:45px;top:138px;width:36px;text-align:center;font-size:14px;line-height:17px;color:#222;white-space:normal">But<br>ton</div>
<svg class="a" style="left:74px;top:168px" width="10" height="9"><path d="M4.5 0.6L8.8 7.9H0.2z" fill="#f4d848" stroke="#a89030" stroke-width="0.9" stroke-linejoin="round"/><rect x="4" y="2.6" width="1" height="2.8" fill="#2a2a20"/><rect x="4" y="6.2" width="1" height="1" fill="#2a2a20"/></svg>
<div class="a" style="left:87px;top:135px;width:36px;height:39px;background:#d6d6d6;border-radius:1px;box-shadow:0 1px 0 #b8b8b8"></div><div class="t" style="left:87px;top:138px;width:36px;text-align:center;font-size:14px;line-height:17px;color:#222;white-space:normal">But<br>ton</div>
<svg class="a" style="left:116px;top:168px" width="10" height="9"><path d="M4.5 0.6L8.8 7.9H0.2z" fill="#f4d848" stroke="#a89030" stroke-width="0.9" stroke-linejoin="round"/><rect x="4" y="2.6" width="1" height="2.8" fill="#2a2a20"/><rect x="4" y="6.2" width="1" height="1" fill="#2a2a20"/></svg>
<div class="a" style="left:129px;top:135px;width:36px;height:39px;background:#d6d6d6;border-radius:1px;box-shadow:0 1px 0 #b8b8b8"></div><div class="t" style="left:129px;top:138px;width:36px;text-align:center;font-size:14px;line-height:17px;color:#222;white-space:normal">But<br>ton</div>
<svg class="a" style="left:158px;top:168px" width="10" height="9"><path d="M4.5 0.6L8.8 7.9H0.2z" fill="#f4d848" stroke="#a89030" stroke-width="0.9" stroke-linejoin="round"/><rect x="4" y="2.6" width="1" height="2.8" fill="#2a2a20"/><rect x="4" y="6.2" width="1" height="1" fill="#2a2a20"/></svg>
<div class="a" style="left:171px;top:135px;width:36px;height:39px;background:#d6d6d6;border-radius:1px;box-shadow:0 1px 0 #b8b8b8"></div><div class="t" style="left:171px;top:138px;width:36px;text-align:center;font-size:14px;line-height:17px;color:#222;white-space:normal">But<br>ton</div>
<svg class="a" style="left:200px;top:168px" width="10" height="9"><path d="M4.5 0.6L8.8 7.9H0.2z" fill="#f4d848" stroke="#a89030" stroke-width="0.9" stroke-linejoin="round"/><rect x="4" y="2.6" width="1" height="2.8" fill="#2a2a20"/><rect x="4" y="6.2" width="1" height="1" fill="#2a2a20"/></svg>
<div class="a" style="left:212px;top:135px;width:34px;height:39px;background:#d6d6d6;border-radius:1px;box-shadow:0 1px 0 #b8b8b8"></div><div class="t" style="left:212px;top:138px;width:34px;text-align:center;font-size:14px;line-height:17px;color:#222;white-space:normal">But<br>ton</div>
<svg class="a" style="left:241px;top:168px" width="10" height="9"><path d="M4.5 0.6L8.8 7.9H0.2z" fill="#f4d848" stroke="#a89030" stroke-width="0.9" stroke-linejoin="round"/><rect x="4" y="2.6" width="1" height="2.8" fill="#2a2a20"/><rect x="4" y="6.2" width="1" height="1" fill="#2a2a20"/></svg>
<div class="a" style="left:3px;top:181px;width:36px;height:39px;background:#d6d6d6;border-radius:1px;box-shadow:0 1px 0 #b8b8b8"></div><div class="t" style="left:3px;top:184px;width:36px;text-align:center;font-size:14px;line-height:17px;color:#222;white-space:normal">But<br>ton</div>
<svg class="a" style="left:32px;top:214px" width="10" height="9"><path d="M4.5 0.6L8.8 7.9H0.2z" fill="#f4d848" stroke="#a89030" stroke-width="0.9" stroke-linejoin="round"/><rect x="4" y="2.6" width="1" height="2.8" fill="#2a2a20"/><rect x="4" y="6.2" width="1" height="1" fill="#2a2a20"/></svg>
<div class="a" style="left:45px;top:181px;width:36px;height:39px;background:#d6d6d6;border-radius:1px;box-shadow:0 1px 0 #b8b8b8"></div><div class="t" style="left:45px;top:184px;width:36px;text-align:center;font-size:14px;line-height:17px;color:#222;white-space:normal">But<br>ton</div>
<svg class="a" style="left:74px;top:214px" width="10" height="9"><path d="M4.5 0.6L8.8 7.9H0.2z" fill="#f4d848" stroke="#a89030" stroke-width="0.9" stroke-linejoin="round"/><rect x="4" y="2.6" width="1" height="2.8" fill="#2a2a20"/><rect x="4" y="6.2" width="1" height="1" fill="#2a2a20"/></svg>
<div class="a" style="left:87px;top:181px;width:36px;height:39px;background:#d6d6d6;border-radius:1px;box-shadow:0 1px 0 #b8b8b8"></div><div class="t" style="left:87px;top:184px;width:36px;text-align:center;font-size:14px;line-height:17px;color:#222;white-space:normal">But<br>ton</div>
<svg class="a" style="left:116px;top:214px" width="10" height="9"><path d="M4.5 0.6L8.8 7.9H0.2z" fill="#f4d848" stroke="#a89030" stroke-width="0.9" stroke-linejoin="round"/><rect x="4" y="2.6" width="1" height="2.8" fill="#2a2a20"/><rect x="4" y="6.2" width="1" height="1" fill="#2a2a20"/></svg>
<div class="a" style="left:129px;top:181px;width:36px;height:39px;background:#d6d6d6;border-radius:1px;box-shadow:0 1px 0 #b8b8b8"></div><div class="t" style="left:129px;top:184px;width:36px;text-align:center;font-size:14px;line-height:17px;color:#222;white-space:normal">But<br>ton</div>
<svg class="a" style="left:158px;top:214px" width="10" height="9"><path d="M4.5 0.6L8.8 7.9H0.2z" fill="#f4d848" stroke="#a89030" stroke-width="0.9" stroke-linejoin="round"/><rect x="4" y="2.6" width="1" height="2.8" fill="#2a2a20"/><rect x="4" y="6.2" width="1" height="1" fill="#2a2a20"/></svg>
<div class="a" style="left:171px;top:181px;width:36px;height:39px;background:#d6d6d6;border-radius:1px;box-shadow:0 1px 0 #b8b8b8"></div><div class="t" style="left:171px;top:184px;width:36px;text-align:center;font-size:14px;line-height:17px;color:#222;white-space:normal">But<br>ton</div>
<svg class="a" style="left:200px;top:214px" width="10" height="9"><path d="M4.5 0.6L8.8 7.9H0.2z" fill="#f4d848" stroke="#a89030" stroke-width="0.9" stroke-linejoin="round"/><rect x="4" y="2.6" width="1" height="2.8" fill="#2a2a20"/><rect x="4" y="6.2" width="1" height="1" fill="#2a2a20"/></svg>
<div class="a" style="left:212px;top:181px;width:34px;height:39px;background:#d6d6d6;border-radius:1px;box-shadow:0 1px 0 #b8b8b8"></div><div class="t" style="left:212px;top:184px;width:34px;text-align:center;font-size:14px;line-height:17px;color:#222;white-space:normal">But<br>ton</div>
<svg class="a" style="left:241px;top:214px" width="10" height="9"><path d="M4.5 0.6L8.8 7.9H0.2z" fill="#f4d848" stroke="#a89030" stroke-width="0.9" stroke-linejoin="round"/><rect x="4" y="2.6" width="1" height="2.8" fill="#2a2a20"/><rect x="4" y="6.2" width="1" height="1" fill="#2a2a20"/></svg>
<div class="a" style="left:3px;top:227px;width:36px;height:39px;background:#d6d6d6;border-radius:1px;box-shadow:0 1px 0 #b8b8b8"></div><div class="t" style="left:3px;top:230px;width:36px;text-align:center;font-size:14px;line-height:17px;color:#222;white-space:normal">But<br>ton</div>
<svg class="a" style="left:32px;top:260px" width="10" height="9"><path d="M4.5 0.6L8.8 7.9H0.2z" fill="#f4d848" stroke="#a89030" stroke-width="0.9" stroke-linejoin="round"/><rect x="4" y="2.6" width="1" height="2.8" fill="#2a2a20"/><rect x="4" y="6.2" width="1" height="1" fill="#2a2a20"/></svg>
<div class="a" style="left:45px;top:227px;width:36px;height:39px;background:#d6d6d6;border-radius:1px;box-shadow:0 1px 0 #b8b8b8"></div><div class="t" style="left:45px;top:230px;width:36px;text-align:center;font-size:14px;line-height:17px;color:#222;white-space:normal">But<br>ton</div>
<svg class="a" style="left:74px;top:260px" width="10" height="9"><path d="M4.5 0.6L8.8 7.9H0.2z" fill="#f4d848" stroke="#a89030" stroke-width="0.9" stroke-linejoin="round"/><rect x="4" y="2.6" width="1" height="2.8" fill="#2a2a20"/><rect x="4" y="6.2" width="1" height="1" fill="#2a2a20"/></svg>
<div class="a" style="left:87px;top:227px;width:36px;height:39px;background:#d6d6d6;border-radius:1px;box-shadow:0 1px 0 #b8b8b8"></div><div class="t" style="left:87px;top:230px;width:36px;text-align:center;font-size:14px;line-height:17px;color:#222;white-space:normal">But<br>ton</div>
<svg class="a" style="left:116px;top:260px" width="10" height="9"><path d="M4.5 0.6L8.8 7.9H0.2z" fill="#f4d848" stroke="#a89030" stroke-width="0.9" stroke-linejoin="round"/><rect x="4" y="2.6" width="1" height="2.8" fill="#2a2a20"/><rect x="4" y="6.2" width="1" height="1" fill="#2a2a20"/></svg>
<div class="a" style="left:129px;top:227px;width:36px;height:39px;background:#d6d6d6;border-radius:1px;box-shadow:0 1px 0 #b8b8b8"></div><div class="t" style="left:129px;top:230px;width:36px;text-align:center;font-size:14px;line-height:17px;color:#222;white-space:normal">But<br>ton</div>
<svg class="a" style="left:158px;top:260px" width="10" height="9"><path d="M4.5 0.6L8.8 7.9H0.2z" fill="#f4d848" stroke="#a89030" stroke-width="0.9" stroke-linejoin="round"/><rect x="4" y="2.6" width="1" height="2.8" fill="#2a2a20"/><rect x="4" y="6.2" width="1" height="1" fill="#2a2a20"/></svg>
<div class="a" style="left:171px;top:227px;width:36px;height:39px;background:#d6d6d6;border-radius:1px;box-shadow:0 1px 0 #b8b8b8"></div><div class="t" style="left:171px;top:230px;width:36px;text-align:center;font-size:14px;line-height:17px;color:#222;white-space:normal">But<br>ton</div>
<svg class="a" style="left:200px;top:260px" width="10" height="9"><path d="M4.5 0.6L8.8 7.9H0.2z" fill="#f4d848" stroke="#a89030" stroke-width="0.9" stroke-linejoin="round"/><rect x="4" y="2.6" width="1" height="2.8" fill="#2a2a20"/><rect x="4" y="6.2" width="1" height="1" fill="#2a2a20"/></svg>
<div class="a" style="left:212px;top:227px;width:34px;height:39px;background:#d6d6d6;border-radius:1px;box-shadow:0 1px 0 #b8b8b8"></div><div class="t" style="left:212px;top:230px;width:34px;text-align:center;font-size:14px;line-height:17px;color:#222;white-space:normal">But<br>ton</div>
<svg class="a" style="left:241px;top:260px" width="10" height="9"><path d="M4.5 0.6L8.8 7.9H0.2z" fill="#f4d848" stroke="#a89030" stroke-width="0.9" stroke-linejoin="round"/><rect x="4" y="2.6" width="1" height="2.8" fill="#2a2a20"/><rect x="4" y="6.2" width="1" height="1" fill="#2a2a20"/></svg>
<div class="a" style="left:3px;top:273px;width:36px;height:39px;background:#d6d6d6;border-radius:1px;box-shadow:0 1px 0 #b8b8b8"></div><div class="t" style="left:3px;top:276px;width:36px;text-align:center;font-size:14px;line-height:17px;color:#222;white-space:normal">But<br>ton</div>
<svg class="a" style="left:32px;top:306px" width="10" height="9"><path d="M4.5 0.6L8.8 7.9H0.2z" fill="#f4d848" stroke="#a89030" stroke-width="0.9" stroke-linejoin="round"/><rect x="4" y="2.6" width="1" height="2.8" fill="#2a2a20"/><rect x="4" y="6.2" width="1" height="1" fill="#2a2a20"/></svg>
<div class="a" style="left:45px;top:273px;width:36px;height:39px;background:#d6d6d6;border-radius:1px;box-shadow:0 1px 0 #b8b8b8"></div><div class="t" style="left:45px;top:276px;width:36px;text-align:center;font-size:14px;line-height:17px;color:#222;white-space:normal">But<br>ton</div>
<svg class="a" style="left:74px;top:306px" width="10" height="9"><path d="M4.5 0.6L8.8 7.9H0.2z" fill="#f4d848" stroke="#a89030" stroke-width="0.9" stroke-linejoin="round"/><rect x="4" y="2.6" width="1" height="2.8" fill="#2a2a20"/><rect x="4" y="6.2" width="1" height="1" fill="#2a2a20"/></svg>
<div class="a" style="left:87px;top:273px;width:36px;height:39px;background:#d6d6d6;border-radius:1px;box-shadow:0 1px 0 #b8b8b8"></div><div class="t" style="left:87px;top:276px;width:36px;text-align:center;font-size:14px;line-height:17px;color:#222;white-space:normal">But<br>ton</div>
<svg class="a" style="left:116px;top:306px" width="10" height="9"><path d="M4.5 0.6L8.8 7.9H0.2z" fill="#f4d848" stroke="#a89030" stroke-width="0.9" stroke-linejoin="round"/><rect x="4" y="2.6" width="1" height="2.8" fill="#2a2a20"/><rect x="4" y="6.2" width="1" height="1" fill="#2a2a20"/></svg>
<div class="a" style="left:129px;top:273px;width:36px;height:39px;background:#d6d6d6;border-radius:1px;box-shadow:0 1px 0 #b8b8b8"></div><div class="t" style="left:129px;top:276px;width:36px;text-align:center;font-size:14px;line-height:17px;color:#222;white-space:normal">But<br>ton</div>
<svg class="a" style="left:158px;top:306px" width="10" height="9"><path d="M4.5 0.6L8.8 7.9H0.2z" fill="#f4d848" stroke="#a89030" stroke-width="0.9" stroke-linejoin="round"/><rect x="4" y="2.6" width="1" height="2.8" fill="#2a2a20"/><rect x="4" y="6.2" width="1" height="1" fill="#2a2a20"/></svg>
<div class="a" style="left:171px;top:273px;width:36px;height:39px;background:#d6d6d6;border-radius:1px;box-shadow:0 1px 0 #b8b8b8"></div><div class="t" style="left:171px;top:276px;width:36px;text-align:center;font-size:14px;line-height:17px;color:#222;white-space:normal">But<br>ton</div>
<svg class="a" style="left:200px;top:306px" width="10" height="9"><path d="M4.5 0.6L8.8 7.9H0.2z" fill="#f4d848" stroke="#a89030" stroke-width="0.9" stroke-linejoin="round"/><rect x="4" y="2.6" width="1" height="2.8" fill="#2a2a20"/><rect x="4" y="6.2" width="1" height="1" fill="#2a2a20"/></svg>
<div class="a" style="left:212px;top:273px;width:34px;height:39px;background:#d6d6d6;border-radius:1px;box-shadow:0 1px 0 #b8b8b8"></div><div class="t" style="left:212px;top:276px;width:34px;text-align:center;font-size:14px;line-height:17px;color:#222;white-space:normal">But<br>ton</div>
<svg class="a" style="left:241px;top:306px" width="10" height="9"><path d="M4.5 0.6L8.8 7.9H0.2z" fill="#f4d848" stroke="#a89030" stroke-width="0.9" stroke-linejoin="round"/><rect x="4" y="2.6" width="1" height="2.8" fill="#2a2a20"/><rect x="4" y="6.2" width="1" height="1" fill="#2a2a20"/></svg>
<div class="a" style="left:3px;top:319px;width:36px;height:39px;background:#d6d6d6;border-radius:1px;box-shadow:0 1px 0 #b8b8b8"></div><div class="t" style="left:3px;top:322px;width:36px;text-align:center;font-size:14px;line-height:17px;color:#222;white-space:normal">But<br>ton</div>
<svg class="a" style="left:32px;top:352px" width="10" height="9"><path d="M4.5 0.6L8.8 7.9H0.2z" fill="#f4d848" stroke="#a89030" stroke-width="0.9" stroke-linejoin="round"/><rect x="4" y="2.6" width="1" height="2.8" fill="#2a2a20"/><rect x="4" y="6.2" width="1" height="1" fill="#2a2a20"/></svg>
<div class="a" style="left:45px;top:319px;width:36px;height:39px;background:#d6d6d6;border-radius:1px;box-shadow:0 1px 0 #b8b8b8"></div><div class="t" style="left:45px;top:322px;width:36px;text-align:center;font-size:14px;line-height:17px;color:#222;white-space:normal">But<br>ton</div>
<svg class="a" style="left:74px;top:352px" width="10" height="9"><path d="M4.5 0.6L8.8 7.9H0.2z" fill="#f4d848" stroke="#a89030" stroke-width="0.9" stroke-linejoin="round"/><rect x="4" y="2.6" width="1" height="2.8" fill="#2a2a20"/><rect x="4" y="6.2" width="1" height="1" fill="#2a2a20"/></svg>
<div class="a" style="left:87px;top:319px;width:36px;height:39px;background:#d6d6d6;border-radius:1px;box-shadow:0 1px 0 #b8b8b8"></div><div class="t" style="left:87px;top:322px;width:36px;text-align:center;font-size:14px;line-height:17px;color:#222;white-space:normal">But<br>ton</div>
<svg class="a" style="left:116px;top:352px" width="10" height="9"><path d="M4.5 0.6L8.8 7.9H0.2z" fill="#f4d848" stroke="#a89030" stroke-width="0.9" stroke-linejoin="round"/><rect x="4" y="2.6" width="1" height="2.8" fill="#2a2a20"/><rect x="4" y="6.2" width="1" height="1" fill="#2a2a20"/></svg>
<div class="a" style="left:129px;top:319px;width:36px;height:39px;background:#d6d6d6;border-radius:1px;box-shadow:0 1px 0 #b8b8b8"></div><div class="t" style="left:129px;top:322px;width:36px;text-align:center;font-size:14px;line-height:17px;color:#222;white-space:normal">But<br>ton</div>
<svg class="a" style="left:158px;top:352px" width="10" height="9"><path d="M4.5 0.6L8.8 7.9H0.2z" fill="#f4d848" stroke="#a89030" stroke-width="0.9" stroke-linejoin="round"/><rect x="4" y="2.6" width="1" height="2.8" fill="#2a2a20"/><rect x="4" y="6.2" width="1" height="1" fill="#2a2a20"/></svg>
<div class="a" style="left:171px;top:319px;width:36px;height:39px;background:#d6d6d6;border-radius:1px;box-shadow:0 1px 0 #b8b8b8"></div><div class="t" style="left:171px;top:322px;width:36px;text-align:center;font-size:14px;line-height:17px;color:#222;white-space:normal">But<br>ton</div>
<svg class="a" style="left:200px;top:352px" width="10" height="9"><path d="M4.5 0.6L8.8 7.9H0.2z" fill="#f4d848" stroke="#a89030" stroke-width="0.9" stroke-linejoin="round"/><rect x="4" y="2.6" width="1" height="2.8" fill="#2a2a20"/><rect x="4" y="6.2" width="1" height="1" fill="#2a2a20"/></svg>
<div class="a" style="left:212px;top:319px;width:34px;height:39px;background:#d6d6d6;border-radius:1px;box-shadow:0 1px 0 #b8b8b8"></div><div class="t" style="left:212px;top:322px;width:34px;text-align:center;font-size:14px;line-height:17px;color:#222;white-space:normal">But<br>ton</div>
<svg class="a" style="left:241px;top:352px" width="10" height="9"><path d="M4.5 0.6L8.8 7.9H0.2z" fill="#f4d848" stroke="#a89030" stroke-width="0.9" stroke-linejoin="round"/><rect x="4" y="2.6" width="1" height="2.8" fill="#2a2a20"/><rect x="4" y="6.2" width="1" height="1" fill="#2a2a20"/></svg>
<div class="a" style="left:3px;top:365px;width:36px;height:39px;background:#d6d6d6;border-radius:1px;box-shadow:0 1px 0 #b8b8b8"></div><div class="t" style="left:3px;top:368px;width:36px;text-align:center;font-size:14px;line-height:17px;color:#222;white-space:normal">But<br>ton</div>
<svg class="a" style="left:32px;top:398px" width="10" height="9"><path d="M4.5 0.6L8.8 7.9H0.2z" fill="#f4d848" stroke="#a89030" stroke-width="0.9" stroke-linejoin="round"/><rect x="4" y="2.6" width="1" height="2.8" fill="#2a2a20"/><rect x="4" y="6.2" width="1" height="1" fill="#2a2a20"/></svg>
<div class="a" style="left:45px;top:365px;width:36px;height:39px;background:#d6d6d6;border-radius:1px;box-shadow:0 1px 0 #b8b8b8"></div><div class="t" style="left:45px;top:368px;width:36px;text-align:center;font-size:14px;line-height:17px;color:#222;white-space:normal">But<br>ton</div>
<svg class="a" style="left:74px;top:398px" width="10" height="9"><path d="M4.5 0.6L8.8 7.9H0.2z" fill="#f4d848" stroke="#a89030" stroke-width="0.9" stroke-linejoin="round"/><rect x="4" y="2.6" width="1" height="2.8" fill="#2a2a20"/><rect x="4" y="6.2" width="1" height="1" fill="#2a2a20"/></svg>
<div class="a" style="left:87px;top:365px;width:36px;height:39px;background:#d6d6d6;border-radius:1px;box-shadow:0 1px 0 #b8b8b8"></div><div class="t" style="left:87px;top:368px;width:36px;text-align:center;font-size:14px;line-height:17px;color:#222;white-space:normal">But<br>ton</div>
<svg class="a" style="left:116px;top:398px" width="10" height="9"><path d="M4.5 0.6L8.8 7.9H0.2z" fill="#f4d848" stroke="#a89030" stroke-width="0.9" stroke-linejoin="round"/><rect x="4" y="2.6" width="1" height="2.8" fill="#2a2a20"/><rect x="4" y="6.2" width="1" height="1" fill="#2a2a20"/></svg>
<div class="a" style="left:129px;top:365px;width:36px;height:39px;background:#d6d6d6;border-radius:1px;box-shadow:0 1px 0 #b8b8b8"></div><div class="t" style="left:129px;top:368px;width:36px;text-align:center;font-size:14px;line-height:17px;color:#222;white-space:normal">But<br>ton</div>
<svg class="a" style="left:158px;top:398px" width="10" height="9"><path d="M4.5 0.6L8.8 7.9H0.2z" fill="#f4d848" stroke="#a89030" stroke-width="0.9" stroke-linejoin="round"/><rect x="4" y="2.6" width="1" height="2.8" fill="#2a2a20"/><rect x="4" y="6.2" width="1" height="1" fill="#2a2a20"/></svg>
<div class="a" style="left:171px;top:365px;width:36px;height:39px;background:#d6d6d6;border-radius:1px;box-shadow:0 1px 0 #b8b8b8"></div><div class="t" style="left:171px;top:368px;width:36px;text-align:center;font-size:14px;line-height:17px;color:#222;white-space:normal">But<br>ton</div>
<svg class="a" style="left:200px;top:398px" width="10" height="9"><path d="M4.5 0.6L8.8 7.9H0.2z" fill="#f4d848" stroke="#a89030" stroke-width="0.9" stroke-linejoin="round"/><rect x="4" y="2.6" width="1" height="2.8" fill="#2a2a20"/><rect x="4" y="6.2" width="1" height="1" fill="#2a2a20"/></svg>
<div class="a" style="left:212px;top:365px;width:34px;height:39px;background:#d6d6d6;border-radius:1px;box-shadow:0 1px 0 #b8b8b8"></div><div class="t" style="left:212px;top:368px;width:34px;text-align:center;font-size:14px;line-height:17px;color:#222;white-space:normal">But<br>ton</div>
<svg class="a" style="left:241px;top:398px" width="10" height="9"><path d="M4.5 0.6L8.8 7.9H0.2z" fill="#f4d848" stroke="#a89030" stroke-width="0.9" stroke-linejoin="round"/><rect x="4" y="2.6" width="1" height="2.8" fill="#2a2a20"/><rect x="4" y="6.2" width="1" height="1" fill="#2a2a20"/></svg>
<div class="a" style="left:3px;top:411px;width:36px;height:39px;background:#d6d6d6;border-radius:1px;box-shadow:0 1px 0 #b8b8b8"></div><div class="t" style="left:3px;top:414px;width:36px;text-align:center;font-size:14px;line-height:17px;color:#222;white-space:normal">But<br>ton</div>
<svg class="a" style="left:32px;top:444px" width="10" height="9"><path d="M4.5 0.6L8.8 7.9H0.2z" fill="#f4d848" stroke="#a89030" stroke-width="0.9" stroke-linejoin="round"/><rect x="4" y="2.6" width="1" height="2.8" fill="#2a2a20"/><rect x="4" y="6.2" width="1" height="1" fill="#2a2a20"/></svg>
<div class="a" style="left:45px;top:411px;width:36px;height:39px;background:#d6d6d6;border-radius:1px;box-shadow:0 1px 0 #b8b8b8"></div><div class="t" style="left:45px;top:414px;width:36px;text-align:center;font-size:14px;line-height:17px;color:#222;white-space:normal">But<br>ton</div>
<svg class="a" style="left:74px;top:444px" width="10" height="9"><path d="M4.5 0.6L8.8 7.9H0.2z" fill="#f4d848" stroke="#a89030" stroke-width="0.9" stroke-linejoin="round"/><rect x="4" y="2.6" width="1" height="2.8" fill="#2a2a20"/><rect x="4" y="6.2" width="1" height="1" fill="#2a2a20"/></svg>
<div class="a" style="left:87px;top:411px;width:36px;height:39px;background:#d6d6d6;border-radius:1px;box-shadow:0 1px 0 #b8b8b8"></div><div class="t" style="left:87px;top:414px;width:36px;text-align:center;font-size:14px;line-height:17px;color:#222;white-space:normal">But<br>ton</div>
<svg class="a" style="left:116px;top:444px" width="10" height="9"><path d="M4.5 0.6L8.8 7.9H0.2z" fill="#f4d848" stroke="#a89030" stroke-width="0.9" stroke-linejoin="round"/><rect x="4" y="2.6" width="1" height="2.8" fill="#2a2a20"/><rect x="4" y="6.2" width="1" height="1" fill="#2a2a20"/></svg>
<div class="a" style="left:129px;top:411px;width:36px;height:39px;background:#d6d6d6;border-radius:1px;box-shadow:0 1px 0 #b8b8b8"></div><div class="t" style="left:129px;top:414px;width:36px;text-align:center;font-size:14px;line-height:17px;color:#222;white-space:normal">But<br>ton</div>
<svg class="a" style="left:158px;top:444px" width="10" height="9"><path d="M4.5 0.6L8.8 7.9H0.2z" fill="#f4d848" stroke="#a89030" stroke-width="0.9" stroke-linejoin="round"/><rect x="4" y="2.6" width="1" height="2.8" fill="#2a2a20"/><rect x="4" y="6.2" width="1" height="1" fill="#2a2a20"/></svg>
<div class="a" style="left:171px;top:411px;width:36px;height:39px;background:#d6d6d6;border-radius:1px;box-shadow:0 1px 0 #b8b8b8"></div><div class="t" style="left:171px;top:414px;width:36px;text-align:center;font-size:14px;line-height:17px;color:#222;white-space:normal">But<br>ton</div>
<svg class="a" style="left:200px;top:444px" width="10" height="9"><path d="M4.5 0.6L8.8 7.9H0.2z" fill="#f4d848" stroke="#a89030" stroke-width="0.9" stroke-linejoin="round"/><rect x="4" y="2.6" width="1" height="2.8" fill="#2a2a20"/><rect x="4" y="6.2" width="1" height="1" fill="#2a2a20"/></svg>
<div class="a" style="left:212px;top:411px;width:34px;height:39px;background:#d6d6d6;border-radius:1px;box-shadow:0 1px 0 #b8b8b8"></div><div class="t" style="left:212px;top:414px;width:34px;text-align:center;font-size:14px;line-height:17px;color:#222;white-space:normal">But<br>ton</div>
<svg class="a" style="left:241px;top:444px" width="10" height="9"><path d="M4.5 0.6L8.8 7.9H0.2z" fill="#f4d848" stroke="#a89030" stroke-width="0.9" stroke-linejoin="round"/><rect x="4" y="2.6" width="1" height="2.8" fill="#2a2a20"/><rect x="4" y="6.2" width="1" height="1" fill="#2a2a20"/></svg>
  </div>
</div>
<!-- canvas scrollbars -->
<div class="a" style="left:974px;top:220px;width:17px;height:431px;background:#efefef"></div>
<svg class="a" style="left:977px;top:223px" width="10" height="7"><path d="M1 6l4-4 4 4" stroke="#b8b8b8" stroke-width="1.8" fill="none"/></svg>
<svg class="a" style="left:977px;top:637px" width="10" height="7"><path d="M1 1l4 4 4-4" stroke="#b8b8b8" stroke-width="1.8" fill="none"/></svg>
<div class="a" style="left:512px;top:651px;width:479px;height:17px;background:#efefef"></div>
<svg class="a" style="left:516px;top:654px" width="7" height="10"><path d="M6 1L2 5l4 4" stroke="#b8b8b8" stroke-width="1.8" fill="none"/></svg>
<svg class="a" style="left:961px;top:654px" width="7" height="10"><path d="M1 1l4 4-4 4" stroke="#b8b8b8" stroke-width="1.8" fill="none"/></svg>

<!-- bottom tabs -->
<div class="a" style="left:472px;top:668px;width:1px;height:19px;background:#a0a0a0"></div>
<div class="a" style="left:356px;top:692px;width:111px;height:1px;background:#a0a0a0"></div>
<svg class="a" style="left:466px;top:687px" width="7" height="6"><path d="M6.5 0q0 5.5-5 5.5H0" stroke="#a0a0a0" fill="none"/></svg>
<svg class="a" style="left:361px;top:673px" width="15" height="14"><rect x="0.5" y="0.5" width="14" height="13" fill="#eef4fc" stroke="#4a6aa0"/><rect x="1" y="1" width="13" height="2" fill="#4a80d0"/><path d="M2.5 6h2M2.5 10h2" stroke="#506080"/><rect x="6.5" y="4.5" width="6" height="3" fill="none" stroke="#6a88b0"/><rect x="6.5" y="8.5" width="6" height="3" fill="none" stroke="#6a88b0"/></svg>
<div class="t" style="left:380px;top:675px;letter-spacing:-0.15px">Graphical Layout</div>
<svg class="a" style="left:478px;top:673px" width="14" height="14"><rect x="0.5" y="0.5" width="13" height="13" rx="1.5" fill="#f4f8fc" stroke="#7a98d0"/><path d="M3 3.5h7" stroke="#20a030"/><path d="M4 5.5h2.5M4 9.5h2.5" stroke="#e03030"/><path d="M5 7.5h6" stroke="#2070e0"/><path d="M3 11.5h3" stroke="#e0a020"/></svg>
<div class="t" style="left:497px;top:675px">ma</div>

<!-- tooltip -->
<div class="a" style="left:512px;top:667px;width:418px;height:28px;background:#fcfbe5;border:1px solid #767676;box-shadow:3px 3px 3px rgba(0,0,0,0.35)"></div>
<svg class="a" style="left:519px;top:673px" width="16" height="16"><rect x="0.5" y="0.5" width="15" height="15" rx="2" fill="url(#okg)" stroke="#8a8a8a"/><text x="2" y="11" font-family="Liberation Sans" font-size="8.5" fill="#6a6a6a">OK</text></svg><svg class="a" style="left:518px;top:680px" width="7" height="9"><path d="M3.5 0.5Q3.9 0.5 4.2 1.2L6.4 6.6Q6.9 8.5 5.5 8.5H1.5Q0.1 8.5 0.6 6.6L2.8 1.2Q3.1 0.5 3.5 0.5z" fill="url(#wg)" stroke="#d08a20" stroke-width="0.9"/><rect x="3" y="3" width="1" height="3" fill="#2a2010"/><rect x="3" y="7" width="1" height="1" fill="#2a2010"/></svg>
<div class="a" style="left:538px;top:673px;width:389px;height:16px;background:#efefe9"></div>
<div class="t" style="left:539px;top:675px">Button20: [I18N] Hardcoded string "Button", should use @string resource</div>

<!-- ===== OUTLINE ===== -->
<div class="a" style="left:1009px;top:80px;width:353px;height:620px;background:#fff;border-radius:6px;box-shadow:0 1px 2px rgba(120,110,80,0.18)"></div>
<svg class="a" style="left:1009px;top:80px" width="89" height="26"><path d="M0.5 26V6A5.5 5.5 0 0 1 6 0.5H83A5.5 5.5 0 0 1 88.5 6V26" fill="url(#tbg)" stroke="url(#tbs)"/></svg>
<svg class="a" style="left:1016px;top:86px" width="14" height="15"><rect x="0.5" y="0.5" width="5" height="5" fill="#bcdcf4" stroke="#1a68b8"/><rect x="0.5" y="9.5" width="5" height="5" fill="#bcdcf4" stroke="#1a68b8"/><path d="M7 3h6M7 12h6M9 7.5h2M12 7.5h1" stroke="#1a58a0"/><rect x="8" y="6.5" width="2" height="2" fill="none" stroke="#1a58a0"/></svg>
<div class="t" style="left:1034px;top:89px">Outline</div>
<svg class="a" style="left:1080px;top:89px" width="11" height="11" viewBox="0 0 11 11"><path d="M0.5 0.5h3l2 2 2-2h3v3l-2 2 2 2v3h-3l-2-2-2 2h-3v-3l2-2-2-2z" fill="none" stroke="#505050"/></svg>
<svg class="a" style="left:1264px;top:87px" width="14" height="14"><rect x="0.5" y="0.5" width="10" height="10" fill="#dde8f4" stroke="#a8b8d0"/><rect x="2.5" y="2.5" width="10" height="10" fill="#eef6fc" stroke="#8090b0"/><path d="M4 8h7" stroke="#1a4a8a" stroke-width="1.5"/></svg>
<svg class="a" style="left:1294px;top:86px" width="11" height="6"><path d="M0.5 0.5h10l-5 5z" fill="#fff" stroke="#606060"/></svg>
<div class="a" style="left:1314px;top:88px;width:10px;height:4px;border:1px solid #606060"></div>
<div class="a" style="left:1337px;top:88px;width:10px;height:10px;border:1px solid #606060;border-top-width:2px"></div>
<!-- outline scrollbar -->
<div class="a" style="left:1339px;top:108px;width:16px;height:291px;background:#efefef"></div>
<div class="a" style="left:1339px;top:310px;width:16px;height:72px;background:#c8c8c8"></div>
<svg class="a" style="left:1342px;top:114px" width="10" height="7"><path d="M1 6l4-4 4 4" stroke="#505050" stroke-width="2" fill="none"/></svg>
<svg class="a" style="left:1342px;top:387px" width="10" height="7"><path d="M1 1l4 4 4-4" stroke="#505050" stroke-width="2" fill="none"/></svg>

<svg class="a" style="left:1114px;top:109px" width="16" height="16"><defs></defs><rect x="0.5" y="0.5" width="15" height="15" rx="2" fill="url(#okg)" stroke="#8a8a8a"/><text x="2" y="11" font-family="Liberation Sans" font-size="8.5" fill="#6a6a6a">OK</text></svg><svg class="a" style="left:1114px;top:116px" width="7" height="9"><path d="M3.5 0.5Q3.9 0.5 4.2 1.2L6.4 6.6Q6.9 8.5 5.5 8.5H1.5Q0.1 8.5 0.6 6.6L2.8 1.2Q3.1 0.5 3.5 0.5z" fill="url(#wg)" stroke="#d08a20" stroke-width="0.9"/><rect x="3" y="3" width="1" height="3" fill="#2a2010"/><rect x="3" y="7" width="1" height="1" fill="#2a2010"/></svg>
<div class="t" style="left:1135px;top:111px">Button20</div>
<svg class="a" style="left:1082px;top:133px" width="7" height="7"><path d="M6.5 0.5v6h-6z" fill="#404040"/></svg>
<svg class="a" style="left:1095px;top:127px" width="16" height="16"><rect x="0.5" y="0.5" width="15" height="15" fill="#fff" stroke="#909090"/><path d="M5.5 1v14M10.5 1v14" stroke="#b0b0b0"/></svg>
<div class="t" style="left:1116px;top:129px">LinearLayout</div>
<svg class="a" style="left:1114px;top:145px" width="16" height="16"><defs></defs><rect x="0.5" y="0.5" width="15" height="15" rx="2" fill="url(#okg)" stroke="#8a8a8a"/><text x="2" y="11" font-family="Liberation Sans" font-size="8.5" fill="#6a6a6a">OK</text></svg><svg class="a" style="left:1114px;top:152px" width="7" height="9"><path d="M3.5 0.5Q3.9 0.5 4.2 1.2L6.4 6.6Q6.9 8.5 5.5 8.5H1.5Q0.1 8.5 0.6 6.6L2.8 1.2Q3.1 0.5 3.5 0.5z" fill="url(#wg)" stroke="#d08a20" stroke-width="0.9"/><rect x="3" y="3" width="1" height="3" fill="#2a2010"/><rect x="3" y="7" width="1" height="1" fill="#2a2010"/></svg>
<div class="t" style="left:1135px;top:147px">Button23</div>
<svg class="a" style="left:1114px;top:163px" width="16" height="16"><defs></defs><rect x="0.5" y="0.5" width="15" height="15" rx="2" fill="url(#okg)" stroke="#8a8a8a"/><text x="2" y="11" font-family="Liberation Sans" font-size="8.5" fill="#6a6a6a">OK</text></svg><svg class="a" style="left:1114px;top:170px" width="7" height="9"><path d="M3.5 0.5Q3.9 0.5 4.2 1.2L6.4 6.6Q6.9 8.5 5.5 8.5H1.5Q0.1 8.5 0.6 6.6L2.8 1.2Q3.1 0.5 3.5 0.5z" fill="url(#wg)" stroke="#d08a20" stroke-width="0.9"/><rect x="3" y="3" width="1" height="3" fill="#2a2010"/><rect x="3" y="7" width="1" height="1" fill="#2a2010"/></svg>
<div class="t" style="left:1135px;top:165px">Button13</div>
<svg class="a" style="left:1114px;top:181px" width="16" height="16"><defs></defs><rect x="0.5" y="0.5" width="15" height="15" rx="2" fill="url(#okg)" stroke="#8a8a8a"/><text x="2" y="11" font-family="Liberation Sans" font-size="8.5" fill="#6a6a6a">OK</text></svg><svg class="a" style="left:1114px;top:188px" width="7" height="9"><path d="M3.5 0.5Q3.9 0.5 4.2 1.2L6.4 6.6Q6.9 8.5 5.5 8.5H1.5Q0.1 8.5 0.6 6.6L2.8 1.2Q3.1 0.5 3.5 0.5z" fill="url(#wg)" stroke="#d08a20" stroke-width="0.9"/><rect x="3" y="3" width="1" height="3" fill="#2a2010"/><rect x="3" y="7" width="1" height="1" fill="#2a2010"/></svg>
<div class="t" style="left:1135px;top:183px">Button17</div>
<svg class="a" style="left:1114px;top:199px" width="16" height="16"><defs></defs><rect x="0.5" y="0.5" width="15" height="15" rx="2" fill="url(#okg)" stroke="#8a8a8a"/><text x="2" y="11" font-family="Liberation Sans" font-size="8.5" fill="#6a6a6a">OK</text></svg><svg class="a" style="left:1114px;top:206px" width="7" height="9"><path d="M3.5 0.5Q3.9 0.5 4.2 1.2L6.4 6.6Q6.9 8.5 5.5 8.5H1.5Q0.1 8.5 0.6 6.6L2.8 1.2Q3.1 0.5 3.5 0.5z" fill="url(#wg)" stroke="#d08a20" stroke-width="0.9"/><rect x="3" y="3" width="1" height="3" fill="#2a2010"/><rect x="3" y="7" width="1" height="1" fill="#2a2010"/></svg>
<div class="t" style="left:1135px;top:201px">Button14</div>
<svg class="a" style="left:1114px;top:217px" width="16" height="16"><defs></defs><rect x="0.5" y="0.5" width="15" height="15" rx="2" fill="url(#okg)" stroke="#8a8a8a"/><text x="2" y="11" font-family="Liberation Sans" font-size="8.5" fill="#6a6a6a">OK</text></svg><svg class="a" style="left:1114px;top:224px" width="7" height="9"><path d="M3.5 0.5Q3.9 0.5 4.2 1.2L6.4 6.6Q6.9 8.5 5.5 8.5H1.5Q0.1 8.5 0.6 6.6L2.8 1.2Q3.1 0.5 3.5 0.5z" fill="url(#wg)" stroke="#d08a20" stroke-width="0.9"/><rect x="3" y="3" width="1" height="3" fill="#2a2010"/><rect x="3" y="7" width="1" height="1" fill="#2a2010"/></svg>
<div class="t" style="left:1135px;top:219px">Button24</div>
<svg class="a" style="left:1114px;top:235px" width="16" height="16"><defs></defs><rect x="0.5" y="0.5" width="15" height="15" rx="2" fill="url(#okg)" stroke="#8a8a8a"/><text x="2" y="11" font-family="Liberation Sans" font-size="8.5" fill="#6a6a6a">OK</text></svg><svg class="a" style="left:1114px;top:242px" width="7" height="9"><path d="M3.5 0.5Q3.9 0.5 4.2 1.2L6.4 6.6Q6.9 8.5 5.5 8.5H1.5Q0.1 8.5 0.6 6.6L2.8 1.2Q3.1 0.5 3.5 0.5z" fill="url(#wg)" stroke="#d08a20" stroke-width="0.9"/><rect x="3" y="3" width="1" height="3" fill="#2a2010"/><rect x="3" y="7" width="1" height="1" fill="#2a2010"/></svg>
<div class="t" style="left:1135px;top:237px">Button15</div>
<svg class="a" style="left:1082px;top:259px" width="7" height="7"><path d="M6.5 0.5v6h-6z" fill="#404040"/></svg>
<svg class="a" style="left:1095px;top:253px" width="16" height="16"><rect x="0.5" y="0.5" width="15" height="15" fill="#fff" stroke="#909090"/><path d="M5.5 1v14M10.5 1v14" stroke="#b0b0b0"/></svg>
<div class="t" style="left:1116px;top:255px">LinearLayout</div>
<svg class="a" style="left:1114px;top:271px" width="16" height="16"><defs></defs><rect x="0.5" y="0.5" width="15" height="15" rx="2" fill="url(#okg)" stroke="#8a8a8a"/><text x="2" y="11" font-family="Liberation Sans" font-size="8.5" fill="#6a6a6a">OK</text></svg><svg class="a" style="left:1114px;top:278px" width="7" height="9"><path d="M3.5 0.5Q3.9 0.5 4.2 1.2L6.4 6.6Q6.9 8.5 5.5 8.5H1.5Q0.1 8.5 0.6 6.6L2.8 1.2Q3.1 0.5 3.5 0.5z" fill="url(#wg)" stroke="#d08a20" stroke-width="0.9"/><rect x="3" y="3" width="1" height="3" fill="#2a2010"/><rect x="3" y="7" width="1" height="1" fill="#2a2010"/></svg>
<div class="t" style="left:1135px;top:273px">Button29</div>
<svg class="a" style="left:1114px;top:289px" width="16" height="16"><defs></defs><rect x="0.5" y="0.5" width="15" height="15" rx="2" fill="url(#okg)" stroke="#8a8a8a"/><text x="2" y="11" font-family="Liberation Sans" font-size="8.5" fill="#6a6a6a">OK</text></svg><svg class="a" style="left:1114px;top:296px" width="7" height="9"><path d="M3.5 0.5Q3.9 0.5 4.2 1.2L6.4 6.6Q6.9 8.5 5.5 8.5H1.5Q0.1 8.5 0.6 6.6L2.8 1.2Q3.1 0.5 3.5 0.5z" fill="url(#wg)" stroke="#d08a20" stroke-width="0.9"/><rect x="3" y="3" width="1" height="3" fill="#2a2010"/><rect x="3" y="7" width="1" height="1" fill="#2a2010"/></svg>
<div class="t" style="left:1135px;top:291px">Button25</div>
<svg class="a" style="left:1114px;top:307px" width="16" height="16"><defs></defs><rect x="0.5" y="0.5" width="15" height="15" rx="2" fill="url(#okg)" stroke="#8a8a8a"/><text x="2" y="11" font-family="Liberation Sans" font-size="8.5" fill="#6a6a6a">OK</text></svg><svg class="a" style="left:1114px;top:314px" width="7" height="9"><path d="M3.5 0.5Q3.9 0.5 4.2 1.2L6.4 6.6Q6.9 8.5 5.5 8.5H1.5Q0.1 8.5 0.6 6.6L2.8 1.2Q3.1 0.5 3.5 0.5z" fill="url(#wg)" stroke="#d08a20" stroke-width="0.9"/><rect x="3" y="3" width="1" height="3" fill="#2a2010"/><rect x="3" y="7" width="1" height="1" fill="#2a2010"/></svg>
<div class="t" style="left:1135px;top:309px">Button30</div>
<svg class="a" style="left:1114px;top:325px" width="16" height="16"><defs></defs><rect x="0.5" y="0.5" width="15" height="15" rx="2" fill="url(#okg)" stroke="#8a8a8a"/><text x="2" y="11" font-family="Liberation Sans" font-size="8.5" fill="#6a6a6a">OK</text></svg><svg class="a" style="left:1114px;top:332px" width="7" height="9"><path d="M3.5 0.5Q3.9 0.5 4.2 1.2L6.4 6.6Q6.9 8.5 5.5 8.5H1.5Q0.1 8.5 0.6 6.6L2.8 1.2Q3.1 0.5 3.5 0.5z" fill="url(#wg)" stroke="#d08a20" stroke-width="0.9"/><rect x="3" y="3" width="1" height="3" fill="#2a2010"/><rect x="3" y="7" width="1" height="1" fill="#2a2010"/></svg>
<div class="t" style="left:1135px;top:327px">Button28</div>
<svg class="a" style="left:1114px;top:343px" width="16" height="16"><defs></defs><rect x="0.5" y="0.5" width="15" height="15" rx="2" fill="url(#okg)" stroke="#8a8a8a"/><text x="2" y="11" font-family="Liberation Sans" font-size="8.5" fill="#6a6a6a">OK</text></svg><svg class="a" style="left:1114px;top:350px" width="7" height="9"><path d="M3.5 0.5Q3.9 0.5 4.2 1.2L6.4 6.6Q6.9 8.5 5.5 8.5H1.5Q0.1 8.5 0.6 6.6L2.8 1.2Q3.1 0.5 3.5 0.5z" fill="url(#wg)" stroke="#d08a20" stroke-width="0.9"/><rect x="3" y="3" width="1" height="3" fill="#2a2010"/><rect x="3" y="7" width="1" height="1" fill="#2a2010"/></svg>
<div class="t" style="left:1135px;top:345px">Button27</div>
<svg class="a" style="left:1114px;top:361px" width="16" height="16"><defs></defs><rect x="0.5" y="0.5" width="15" height="15" rx="2" fill="url(#okg)" stroke="#8a8a8a"/><text x="2" y="11" font-family="Liberation Sans" font-size="8.5" fill="#6a6a6a">OK</text></svg><svg class="a" style="left:1114px;top:368px" width="7" height="9"><path d="M3.5 0.5Q3.9 0.5 4.2 1.2L6.4 6.6Q6.9 8.5 5.5 8.5H1.5Q0.1 8.5 0.6 6.6L2.8 1.2Q3.1 0.5 3.5 0.5z" fill="url(#wg)" stroke="#d08a20" stroke-width="0.9"/><rect x="3" y="3" width="1" height="3" fill="#2a2010"/><rect x="3" y="7" width="1" height="1" fill="#2a2010"/></svg>
<div class="t" style="left:1135px;top:363px">Button26</div>
<svg class="a" style="left:1082px;top:385px" width="7" height="7"><path d="M6.5 0.5v6h-6z" fill="#404040"/></svg>
<svg class="a" style="left:1095px;top:379px" width="16" height="16"><rect x="0.5" y="0.5" width="15" height="15" fill="#fff" stroke="#909090"/><path d="M5.5 1v14M10.5 1v14" stroke="#b0b0b0"/></svg>
<div class="t" style="left:1116px;top:381px">LinearLayout</div>
<div class="a" style="left:1009px;top:399px;width:330px;height:4px;background:#fff"></div>
<div class="a" style="left:1114px;top:397px;width:16px;height:2px;border:1px solid #909090;border-bottom:0;background:#e4e4e4"></div>
<!-- properties -->
<div class="a" style="left:1016px;top:402px;width:340px;height:291px;border:1px solid #a0a0b0;background:#fff"></div>
<svg class="a" style="left:1020px;top:409px" width="14" height="12"><rect x="0.5" y="0.5" width="13" height="11" fill="#f4f8fc" stroke="#506a90"/><rect x="1" y="1" width="12" height="2" fill="#8aa8d0"/><path d="M1 5.5h12M1 8.5h12M4.5 3v9" stroke="#a0b0c8"/></svg>
<div class="t" style="left:1039px;top:409px">Properties</div>
<svg class="a" style="left:1218px;top:408px" width="16" height="15"><path d="M0 1.5h5M3.5 0l1.5 1.5-1.5 1.5M6.5 0v3.5M0 12.5h5M3.5 11l1.5 1.5-1.5 1.5M6.5 11v3.5" stroke="#3a4a5a" fill="none"/><path d="M3.5 5.5h7v-2l4 4-4 4v-2h-7z" fill="#f8e098" stroke="#d09020"/><path d="M4 7.5h7" stroke="#d09020" stroke-width="0.8"/></svg>
<div class="a" style="left:1239px;top:406px;width:1px;height:17px;background:#909090"></div>
<div class="a" style="left:1245px;top:404px;width:23px;height:22px;background:#c0dcf8;border:1px solid #70a8e8"></div>
<svg class="a" style="left:1248px;top:407px" width="18" height="17"><path d="M2.5 2v12.5M0.5 11.5l2 3 2-3" stroke="#505050" fill="none"/><text x="5.5" y="8" font-family="Liberation Serif" font-weight="bold" font-size="10" fill="#1a8a70">a</text><text x="9.5" y="16" font-family="Liberation Serif" font-weight="bold" font-size="10" fill="#a02a8a">z</text></svg>
<div class="a" style="left:1270px;top:406px;width:1px;height:17px;background:#909090"></div>
<svg class="a" style="left:1280px;top:408px" width="15" height="14"><rect x="0.5" y="0.5" width="12" height="10" fill="#f4f4f4" stroke="#b0b0b0"/><path d="M1 3.5h11M1 6.5h11M5 1v10" stroke="#c8c8c8"/><path d="M8 7l6 4-2.5.5 1.5 2.5" stroke="#a0a0a0" fill="#fff"/></svg>
<div class="a" style="left:1301px;top:406px;width:1px;height:17px;background:#909090"></div>
<svg class="a" style="left:1312px;top:408px" width="14" height="14"><rect x="0.5" y="0.5" width="10" height="10" fill="#dde8f4" stroke="#a8b8d0"/><rect x="2.5" y="2.5" width="10" height="10" fill="#eef6fc" stroke="#8090b0"/><path d="M4 8h7M7.5 4.5v7" stroke="#1a4a8a" stroke-width="1.4"/></svg>
<svg class="a" style="left:1335px;top:408px" width="14" height="14"><rect x="0.5" y="0.5" width="10" height="10" fill="#dde8f4" stroke="#a8b8d0"/><rect x="2.5" y="2.5" width="10" height="10" fill="#eef6fc" stroke="#8090b0"/><path d="M4 8h7" stroke="#1a4a8a" stroke-width="1.4"/></svg>
<div class="a" style="left:1017px;top:426px;width:338px;height:1px;background:#909090"></div>
<div class="a" style="left:1337px;top:429px;width:16px;height:263px;background:#efefef"></div>
<svg class="a" style="left:1340px;top:434px" width="10" height="7"><path d="M1 6l4-4 4 4" stroke="#c0c0c0" stroke-width="1.8" fill="none"/></svg>
<svg class="a" style="left:1340px;top:679px" width="10" height="7"><path d="M1 1l4 4 4-4" stroke="#c0c0c0" stroke-width="1.8" fill="none"/></svg>
<div class="t" style="left:1134px;top:554px;color:#787878">&lt;No properties&gt;</div>

<!-- ===== STATUS BAR ===== -->
<div class="a" style="left:938px;top:706px;width:132px;height:22px;background:#e8e8ea;border-left:1px solid #c0c0c0;border-right:1px solid #c0c0c0;border-top:1px solid #d8d8d8"></div>
<div class="a" style="left:939px;top:707px;width:94px;height:21px;background:#fcfbe2"></div><div class="a" style="left:1033px;top:707px;width:1px;height:21px;background:#909090"></div>
<div class="t" style="left:964px;top:711px">724M of 1000M</div>
<svg class="a" style="left:1071px;top:708px" width="12" height="17"><rect x="0.5" y="1" width="11" height="2" fill="#3a80c0"/><rect x="4" y="0" width="4" height="1.5" fill="#3a80c0"/><path d="M1.5 4h9l-1 12h-7z" fill="#8ac0e8" stroke="#2a70b0"/><path d="M4 5.5v9M6 5.5v9M8 5.5v9" stroke="#2a70b0"/></svg>
<div class="t" style="left:1087px;top:711px">Android SDK Content Loader</div>

<!-- ===== TASKBAR ===== -->
<div class="a" style="left:0;top:728px;width:1366px;height:40px;background:linear-gradient(90deg,#5d5641 0px,#5f5842 600px,#615a43 860px,#6b644b 920px,#736c52 1010px,#716a50 1100px,#6a644c 1180px,#67614a 1240px,#6b654c 1300px,#6d674e 1366px)"></div>
<div class="a" style="left:886px;top:728px;width:280px;height:40px;background:radial-gradient(ellipse 40px 30px at 30px 8px,rgba(170,150,105,0.45),rgba(170,150,105,0) 100%),radial-gradient(ellipse 150px 32px at 150px 6px,rgba(170,150,105,0.5),rgba(170,150,105,0) 100%)"></div>
<div class="a" style="left:880px;top:728px;width:290px;height:40px;opacity:0.28;background:repeating-linear-gradient(80deg,rgba(40,32,15,1) 0 2px,rgba(0,0,0,0) 2px 8px),repeating-linear-gradient(-80deg,rgba(40,32,15,1) 0 2px,rgba(0,0,0,0) 2px 8px)"></div>
<div class="a" style="left:915px;top:728px;width:90px;height:40px;background:rgba(80,75,52,0.75);clip-path:polygon(0 0,32px 0,90px 40px,52px 40px);filter:blur(2px)"></div>
<div class="a" style="left:858px;top:728px;width:30px;height:40px;background:linear-gradient(90deg,rgba(85,80,58,0),rgba(85,80,58,0.6),rgba(85,80,58,0))"></div>
<div class="a" style="left:0;top:728px;width:1366px;height:1px;background:#4e4836"></div>
<!-- windows logo -->
<svg class="a" style="left:12px;top:735px" width="27" height="26"><path d="M0 3.5l11-1.5v10.5H0zM12.5 1.8L27 0v12.5H12.5zM0 13.8h11v10.5L0 22.8zM12.5 13.8H27V26l-14.5-2z" fill="#fff"/></svg>
<!-- explorer -->
<svg class="a" style="left:65px;top:735px" width="32" height="28"><path d="M1 6h11l2-3h16v22H1z" fill="#e8c870" stroke="#b89040"/><rect x="2" y="9" width="28" height="16" fill="#f8e8a8"/><rect x="4" y="2" width="8" height="4" fill="#fff"/><rect x="5" y="2.5" width="3" height="2" fill="#20a030"/><rect x="13" y="4" width="8" height="4" fill="#fff"/><rect x="14" y="4.5" width="3" height="2" fill="#e02020"/><rect x="21" y="6" width="7" height="4" fill="#fff"/><rect x="22" y="6.5" width="3" height="2" fill="#2070e0"/><path d="M5 28v-10h22v10h-5v-6h-12v6z" fill="#50b0f0" stroke="#2070c0"/></svg>
<!-- shield -->
<svg class="a" style="left:131px;top:733px" width="24" height="29"><defs><linearGradient id="sh" x1="0" x2="1"><stop offset="0" stop-color="#e8e8e8"/><stop offset="1" stop-color="#707070"/></linearGradient></defs><path d="M12 0L24 4v9q0 10-12 16Q0 23 0 13V4z" fill="url(#sh)" stroke="#505050" stroke-width="0.8"/><path d="M7.5 13v-3a4.5 4.5 0 0 1 9 0v3" stroke="#404040" stroke-width="2" fill="none"/><rect x="6" y="13" width="12" height="9" fill="#404040"/><rect x="11" y="15" width="2" height="4" fill="#f09020"/></svg>
<!-- IE -->
<svg class="a" style="left:189px;top:731px" width="33" height="33"><path d="M8.5 17.5H25A9 9 0 1 0 22.5 24" stroke="#1a80d0" stroke-width="6.5" fill="none"/><path d="M8.5 17.5H25A9 9 0 1 0 22.5 24" stroke="#30b4f0" stroke-width="4.5" fill="none"/><path d="M6 28Q-2 31 6 20T27 4Q33 1 30 8" stroke="#f4c418" stroke-width="2.4" fill="none"/></svg>
<!-- word -->
<svg class="a" style="left:251px;top:732px" width="32" height="31"><rect x="6" y="2" width="24" height="28" fill="#fff" stroke="#b0b8c8"/><path d="M12 10h14M12 14h14M12 18h14M12 22h14M12 26h14" stroke="#3a5aa0" stroke-width="1.5"/><rect x="1" y="4" width="18" height="18" fill="#2a58b0" transform="skewY(-4)"/><text x="3" y="18" font-family="Liberation Sans" font-weight="bold" font-size="14" fill="#fff">W</text></svg>
<!-- lenovo -->
<svg class="a" style="left:313px;top:733px" width="32" height="30"><rect x="0.5" y="0.5" width="31" height="22" fill="#1858b0" stroke="#d0d8e8" stroke-width="1.5"/><rect x="3" y="3" width="26" height="17" fill="#2a78d0"/><text x="4.5" y="15" font-family="Liberation Sans" font-style="italic" font-weight="bold" font-size="7.5" fill="#fff">lenovo</text><path d="M13 23h6v3h-6zM8 27h16v2H8z" fill="#e8e8e8"/></svg>
<!-- firefox highlight -->
<div class="a" style="left:362px;top:729px;width:58px;height:38px;background:rgba(255,255,255,0.22);border:1px solid rgba(255,255,255,0.45)"></div>
<svg class="a" style="left:375px;top:732px" width="32" height="32"><defs><radialGradient id="ffg" cx="45%" cy="40%" r="60%"><stop offset="0" stop-color="#5ab8f0"/><stop offset="0.6" stop-color="#2a6ac8"/><stop offset="1" stop-color="#1a2a80"/></radialGradient><linearGradient id="ffo" x1="0" y1="0" x2="1" y2="1"><stop offset="0" stop-color="#f88a20"/><stop offset="0.6" stop-color="#e85a18"/><stop offset="1" stop-color="#f8a830"/></linearGradient></defs><circle cx="17" cy="14" r="12" fill="url(#ffg)"/><path d="M27 5Q31 10 30 16" stroke="#f8c838" stroke-width="2.5" fill="none"/><path d="M4 9Q0 20 8 27Q16 33 25 28Q31 23 30 15Q28 23 20 24Q12 25 10 18Q9 13 12 11Q14 10 15 11Q14 8 11 8Q8 8 7 10Q7 6 9 3Q5 5 4 9Z" fill="url(#ffo)"/></svg>
<!-- store -->
<div class="a" style="left:437px;top:733px;width:31px;height:30px;background:#088c08"></div>
<svg class="a" style="left:442px;top:737px" width="21" height="22"><path d="M6 6v-2a4.5 4.5 0 0 1 9 0v2" stroke="#fff" stroke-width="1.8" fill="none"/><path d="M0 6h21v16H0z" fill="#fff"/><path d="M4 10h6v4H4zM11 10h6v4h-6zM4 15h6v4H4zM11 15h6v4h-6z" fill="#088c08"/></svg>
<!-- android studio -->
<svg class="a" style="left:501px;top:733px" width="29" height="31"><circle cx="14.5" cy="13" r="13" fill="#78b048"/><path d="M14.5 9L5 30M14.5 9L24 30M8 22h13" stroke="#e8e8e8" stroke-width="2.5"/><circle cx="14.5" cy="9" r="4" fill="none" stroke="#404040" stroke-width="2"/><path d="M14.5 3v2" stroke="#404040" stroke-width="2"/></svg>
<!-- eclipse -->
<svg class="a" style="left:562px;top:732px" width="32" height="32"><defs><radialGradient id="ecg" cx="45%" cy="25%" r="75%"><stop offset="0" stop-color="#c8b0f0"/><stop offset="0.55" stop-color="#6a48b0"/><stop offset="1" stop-color="#2a1a5a"/></radialGradient></defs><circle cx="16" cy="16" r="15.5" fill="url(#ecg)"/><path d="M1.5 14h29M1 17.5h30M2 21h28" stroke="#f0ecff" stroke-width="1.5"/></svg>
<!-- media player -->
<svg class="a" style="left:624px;top:733px" width="30" height="30"><circle cx="15" cy="15" r="14.5" fill="#f0a030" stroke="#c86010"/><circle cx="15" cy="15" r="11" fill="none" stroke="#fff" stroke-width="2"/><circle cx="15" cy="15" r="7.5" fill="#e87a10" stroke="#fff" stroke-width="1.5"/><path d="M12.5 10.5v9l7-4.5z" fill="#fff"/></svg>
<!-- chrome -->
<svg class="a" style="left:686px;top:732px" width="30" height="30"><circle cx="15" cy="15" r="14.5" fill="#e04030"/><path d="M15 15L2.4 22.2A14.5 14.5 0 0 0 15 29.5z" fill="#30a050"/><path d="M15 15L2.4 22.2A14.5 14.5 0 0 1 2.5 7.7L9 12z" fill="#30a050"/><path d="M15 15l0 14.5A14.5 14.5 0 0 0 29.5 15H15z" fill="#f8c820"/><path d="M15 15l12.6-7.3A14.5 14.5 0 0 1 29.5 15z" fill="#f8c820"/><circle cx="15" cy="15" r="6.5" fill="#fff"/><circle cx="15" cy="15" r="5" fill="#3a7ae0"/></svg>
<!-- B4A highlight -->
<div class="a" style="left:734px;top:729px;width:50px;height:38px;background:rgba(255,255,255,0.22);border:1px solid rgba(255,255,255,0.45)"></div>
<div class="a" style="left:786px;top:729px;width:2px;height:38px;background:rgba(255,255,255,0.3)"></div>
<div class="a" style="left:790px;top:729px;width:2px;height:38px;background:rgba(255,255,255,0.3)"></div>
<div class="a" style="left:743px;top:732px;width:32px;height:32px;background:#fff"></div>
<div class="t" style="left:745px;top:741px;font-size:15px;color:#40c4d0;letter-spacing:-0.8px;transform:scaleY(1.1)">B4A</div><div class="a" style="left:755px;top:755px;width:20px;height:5px;border-radius:50%;background:rgba(200,200,200,0.5)"></div>
<!-- {} highlight -->
<div class="a" style="left:796px;top:729px;width:58px;height:38px;background:rgba(255,255,255,0.3);border:1px solid rgba(255,255,255,0.7)"></div>
<svg class="a" style="left:810px;top:733px" width="30" height="30"><defs><radialGradient id="gi2" cx="45%" cy="40%" r="60%"><stop offset="0" stop-color="#e0f850"/><stop offset="0.65" stop-color="#a8d010"/><stop offset="1" stop-color="#3a6a08"/></radialGradient></defs><circle cx="15" cy="15" r="14.5" fill="url(#gi2)"/><g transform="translate(15 15) scale(1.75) translate(-8 -8)"><path d="M7 3.5q-1.5 0-1.5 1.5v2q0 1-1 1.2 1 .3 1 1.3v2q0 1.5 1.5 1.5M9 3.5q1.5 0 1.5 1.5v2q0 1 1 1.2-1 .3-1 1.3v2q0 1.5-1.5 1.5" stroke="#1a1a30" stroke-width="1.3" fill="none"/></g></svg>

<!-- tray -->
<svg class="a" style="left:1132px;top:747px" width="9" height="6"><path d="M0 5.5L4.5 0 9 5.5z" fill="#fff"/></svg>
<svg class="a" style="left:1154px;top:742px" width="15" height="15"><path d="M0 2l6-1v6H0zM7 0.8L15 0v7H7zM0 8h6v6l-6-1zM7 8h8v7l-8-1z" fill="#fff"/></svg>
<svg class="a" style="left:1183px;top:740px" width="10" height="17"><rect x="0.8" y="2.8" width="8.4" height="13.4" rx="1" fill="none" stroke="#fff" stroke-width="1.6"/><rect x="3" y="0" width="4" height="2.5" fill="#fff"/><rect x="2.5" y="6" width="5" height="8.5" fill="#fff"/></svg>
<svg class="a" style="left:1201px;top:742px" width="16" height="14"><path d="M0 12h2v2H0zM3.5 10h2v4h-2zM7 7.5h2V14H7zM10.5 4.5h2V14h-2zM14 1h2v13h-2z" fill="#fff"/></svg>
<svg class="a" style="left:1226px;top:741px" width="15" height="15"><path d="M0 5h3l4-4v13l-4-4H0z" fill="#fff"/><path d="M9.5 4.5q2 3 0 6M11.5 2.5q3.5 5 0 10" stroke="#fff" stroke-width="1.3" fill="none"/></svg>
<div class="t" style="left:1255px;top:743px;color:#fff;font-size:11.5px">ENG</div>
<div class="t" style="left:1295px;top:735px;color:#fff;font-size:12px;width:52px;text-align:right;transform:scaleX(0.94);transform-origin:right">09:10 ق.ظ</div>
<div class="t" style="left:1285px;top:752px;color:#fff;font-size:12px;width:62px;text-align:right;transform:scaleX(0.9);transform-origin:right">۲۰۱۶/۰۲/۱۸</div>

</body></html>
